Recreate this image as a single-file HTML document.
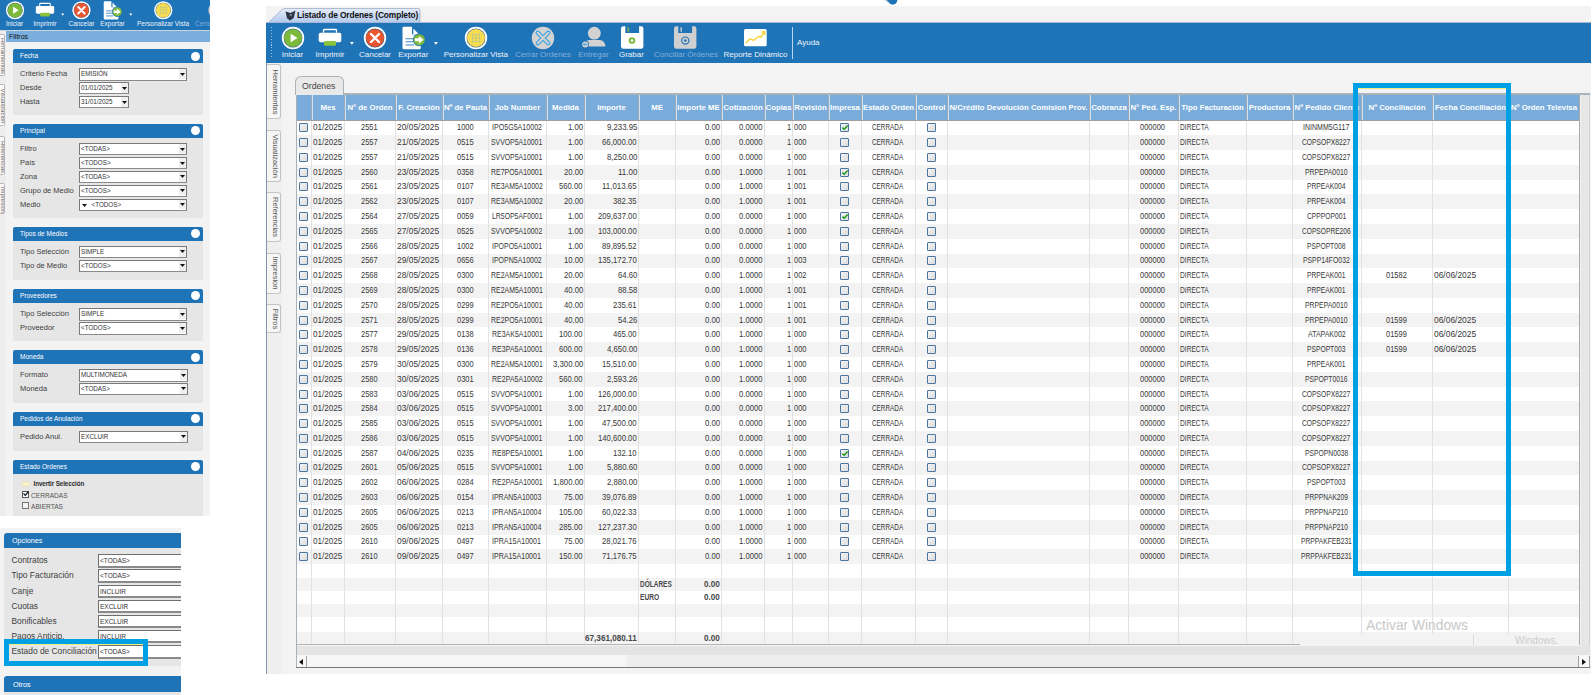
<!DOCTYPE html><html><head><meta charset="utf-8"><style>
html,body{margin:0;padding:0}
body{width:1594px;height:695px;overflow:hidden;background:#fff;position:relative;font-family:"Liberation Sans",sans-serif;color:#333}
div{position:absolute;white-space:nowrap;box-sizing:border-box}
svg{position:absolute;overflow:visible}
</style></head><body>
<div style="left:0px;top:0px;width:210px;height:30px;background:#1f73b7"></div>
<div style="left:0;top:0;width:210px;height:30px;overflow:hidden"><div style="left:0;top:0;width:1px;height:1px;transform-origin:0 0;transform:translate(-222.3px,-20.54px) scale(0.81)"><svg style="left:280.5px;top:25.700000000000003px" width="24" height="24"><circle cx="12" cy="12" r="11.2" fill="#fff"/><circle cx="12" cy="12" r="9.4" fill="#2a5f8f"/><circle cx="12" cy="12" r="9" fill="#7dba3c"/><path d="M9.6 7.8 L16.6 12 L9.6 16.2 Z" fill="#fff"/></svg>
<div style="left:232.39999999999998px;top:49px;width:120px;height:12px;line-height:12px;text-align:center;font-size:8px;color:#eef4fa">Iniciar</div>
<svg style="left:318px;top:29px" width="24" height="18"><path d="M5.5 3.8 V1.2 Q5.5 0.5 6.3 0.5 H17.7 Q18.5 0.5 18.5 1.2 V3.8" stroke="#fff" stroke-width="1.3" fill="none"/><rect x="0.7" y="3.7" width="22.6" height="9.6" rx="1.8" fill="#fff"/><rect x="6" y="12" width="12" height="4.7" rx="1.3" fill="#8cc43c"/></svg>
<div style="left:270px;top:49px;width:120px;height:12px;line-height:12px;text-align:center;font-size:8px;color:#eef4fa">Imprimir</div>
<svg style="left:349.6px;top:41.7px" width="4" height="3"><path d="M0 0H3.8L1.9 2.7Z" fill="#fff"/></svg>
<svg style="left:363.2px;top:25.700000000000003px" width="24" height="24"><circle cx="12" cy="12" r="11.2" fill="#fff"/><circle cx="12" cy="12" r="9.4" fill="#2a5f8f"/><circle cx="12" cy="12" r="9" fill="#e9552e"/><path d="M8 8 L16 16 M16 8 L8 16" stroke="#fff" stroke-width="2.4" stroke-linecap="round"/></svg>
<div style="left:315px;top:49px;width:120px;height:12px;line-height:12px;text-align:center;font-size:8px;color:#eef4fa">Cancelar</div>
<svg style="left:401.5px;top:26.5px" width="25" height="23"><path d="M0.5 1 Q0.5 -0.2 1.8 -0.2 H10 V7.3 H18.7 V21 Q18.7 22.3 17.4 22.3 H1.8 Q0.5 22.3 0.5 21 Z" fill="#fff"/><path d="M11.3 1.5 V7 H16.6 Z" fill="#fff"/><path d="M3.5 11.8H12 M3.5 14.7H12 M3.5 18H12" stroke="#3f86c4" stroke-width="1.1"/><circle cx="17.2" cy="12.8" r="6.4" fill="#1f73b7"/><circle cx="17.2" cy="12.8" r="5.6" fill="#7dba3c"/><path d="M12.8 11.3 H16.8 V8.9 L21.6 12.8 L16.8 16.7 V14.3 H12.8 Z" fill="#fff"/></svg>
<div style="left:353.3px;top:49px;width:120px;height:12px;line-height:12px;text-align:center;font-size:8px;color:#eef4fa">Exportar</div>
<svg style="left:433.8px;top:41.7px" width="4" height="3"><path d="M0 0H3.8L1.9 2.7Z" fill="#fff"/></svg>
<svg style="left:463.9px;top:25.5px" width="24" height="24"><circle cx="12" cy="12" r="11.2" fill="#fff"/><circle cx="12" cy="12" r="9.4" fill="#2a5f8f"/><circle cx="12" cy="12" r="9" fill="#f6dc4e"/><path d="M7.5 8.5H16.5M7.5 12H16.5M7.5 15.5H16.5M8.5 7.5V16.5M12 7.5V16.5M15.5 7.5V16.5" stroke="#b9c98a" stroke-width="0.8"/></svg>
<div style="left:415.8px;top:49px;width:120px;height:12px;line-height:12px;text-align:center;font-size:8px;color:#eef4fa">Personalizar Vista</div>
<svg style="left:530.5px;top:25.5px" width="24" height="24"><circle cx="12" cy="12" r="11.2" fill="#d2d2d2"/><path d="M6.8 6.8 L17.2 17.2 M17.2 6.8 L6.8 17.2" stroke="#3aa1e0" stroke-width="4.4" stroke-linecap="round"/><path d="M6.8 6.8 L17.2 17.2 M17.2 6.8 L6.8 17.2" stroke="#d2d2d2" stroke-width="2.2" stroke-linecap="round"/></svg>
<div style="left:483px;top:49px;width:120px;height:12px;line-height:12px;text-align:center;font-size:8px;color:#82b0dc">Cerrar Ordenes</div>
<svg style="left:581px;top:25.5px" width="26" height="24"><circle cx="13.3" cy="7.2" r="6.4" fill="#d2d2d2"/><path d="M1.5 20.5 Q2.5 14.5 8.5 14 H18.5 Q24 14.5 24.5 20.5Z" fill="#d2d2d2"/><circle cx="4.2" cy="18.4" r="3.8" fill="#1f73b7"/><circle cx="4.2" cy="18.4" r="3" fill="#d2d2d2"/><path d="M2.2 18.4 H5.8" stroke="#3aa1e0" stroke-width="1.5"/></svg>
<div style="left:533.5px;top:49px;width:120px;height:12px;line-height:12px;text-align:center;font-size:8px;color:#82b0dc">Entregar</div>
<svg style="left:621px;top:26px" width="23" height="23"><path d="M2.5 0.2 H20 Q22.4 0.2 22.4 2.6 V20.4 Q22.4 22.8 20 22.8 H2.5 Q0 22.8 0 20.4 V2.6 Q0 0.2 2.5 0.2Z" fill="#fff"/><rect x="4.3" y="0" width="13.8" height="7" fill="#1f73b7"/><rect x="6.5" y="1.2" width="1.4" height="4.5" fill="#7dba3c"/><circle cx="11" cy="14.6" r="3.3" fill="#7dba3c"/><circle cx="11" cy="14.6" r="1.3" fill="#fff"/></svg>
<div style="left:571.4px;top:49px;width:120px;height:12px;line-height:12px;text-align:center;font-size:8px;color:#eef4fa">Grabar</div>
<svg style="left:674.2px;top:26px" width="23" height="23"><path d="M2.5 0.2 H20 Q22.4 0.2 22.4 2.6 V20.4 Q22.4 22.8 20 22.8 H2.5 Q0 22.8 0 20.4 V2.6 Q0 0.2 2.5 0.2Z" fill="#cfcfcf"/><rect x="4.3" y="0" width="13.8" height="7" fill="#1f73b7"/><rect x="6.5" y="1.2" width="1.4" height="4.5" fill="#cfcfcf"/><circle cx="11.3" cy="14.6" r="3.6" fill="none" stroke="#1f73b7" stroke-width="1.2"/><circle cx="11.3" cy="14.6" r="1.3" fill="#1f73b7"/></svg>
<div style="left:626px;top:49px;width:120px;height:12px;line-height:12px;text-align:center;font-size:8px;color:#82b0dc">Conciliar Órdenes</div>
<svg style="left:744px;top:28.9px" width="23" height="18"><rect x="0" y="0" width="22.7" height="17.3" rx="1.5" fill="#fff"/><path d="M2 14 L6 9.8 L10 11.3 L14.5 7.5 L17 8.2 L20 3.5" stroke="#f3d23a" stroke-width="1.4" fill="none" stroke-linejoin="round"/><path d="M17.5 3.2 L20.8 2.6 L20.6 6" stroke="#f3d23a" stroke-width="1.4" fill="none"/></svg>
<div style="left:695.5px;top:49px;width:120px;height:12px;line-height:12px;text-align:center;font-size:8px;color:#eef4fa">Reporte Dinámico</div>
<div style="left:792px;top:26.8px;width:1.2px;height:32.5px;background:#bcd4ec"></div>
<div style="left:797px;top:37px;width:40px;height:12px;line-height:12px;font-size:8px;color:#eef4fa">Ayuda</div></div></div>
<div style="left:0px;top:30px;width:6px;height:486px;background:#ededed"></div>
<div style="left:0;top:33.5px;width:5px;height:42.0px;border:1px solid #b8b8b8;border-left:none;background:#f9f9f9;border-radius:0 2px 2px 0;overflow:hidden"><div style="left:-27.5px;top:17.0px;width:60px;height:8px;line-height:8px;text-align:center;font-size:6px;color:#666;transform:rotate(90deg)">Herramientas</div></div>
<div style="left:0;top:84px;width:5px;height:42px;border:1px solid #b8b8b8;border-left:none;background:#f9f9f9;border-radius:0 2px 2px 0;overflow:hidden"><div style="left:-27.5px;top:17.0px;width:60px;height:8px;line-height:8px;text-align:center;font-size:6px;color:#666;transform:rotate(90deg)">Visualización</div></div>
<div style="left:0;top:136px;width:5px;height:39px;border:1px solid #b8b8b8;border-left:none;background:#f9f9f9;border-radius:0 2px 2px 0;overflow:hidden"><div style="left:-27.5px;top:15.5px;width:60px;height:8px;line-height:8px;text-align:center;font-size:6px;color:#666;transform:rotate(90deg)">Referencias</div></div>
<div style="left:0;top:183px;width:5px;height:31px;border:1px solid #b8b8b8;border-left:none;background:#f9f9f9;border-radius:0 2px 2px 0;overflow:hidden"><div style="left:-27.5px;top:11.5px;width:60px;height:8px;line-height:8px;text-align:center;font-size:6px;color:#666;transform:rotate(90deg)">Impresion</div></div>
<div style="left:0px;top:30px;width:210px;height:1px;background:#c9d3dc"></div>
<div style="left:6px;top:30.5px;width:204px;height:11px;background:#7aaedc"></div>
<div style="left:9px;top:30.5px;width:60px;height:11px;line-height:11px;font-size:7px;color:#111">Filtros</div>
<div style="left:6px;top:41.5px;width:204px;height:474.5px;background:#f3f3f3"></div>
<div style="left:13px;top:49px;width:190px;height:14px;background:#1f73b7;border-radius:2px 2px 0 0"></div>
<div style="left:20px;top:49px;width:150px;height:14px;line-height:14px;font-size:6.5px;color:#fff">Fecha</div>
<div style="left:191px;top:51.5px;width:9px;height:9px;border-radius:50%;background:#fff"></div>
<div style="left:13px;top:63px;width:190px;height:52px;background:#e6e6e6"></div>
<div style="left:20px;top:68.3px;width:58px;height:12.299999999999997px;line-height:12.299999999999997px;font-size:7.5px;color:#3e3e3e">Criterio Fecha</div>
<div style="left:79px;top:68.3px;width:108px;height:12.299999999999997px;background:#fff;border:1px solid #7a7a7a;border-bottom:1.5px solid #8a8a8a"></div>
<div style="left:81px;top:68.3px;width:98px;height:12.299999999999997px;line-height:12.299999999999997px;font-size:6.3px;color:#333">EMISIÓN</div>
<div style="left:178.5px;top:69.3px;width:7.5px;height:9.799999999999997px;background:#efefef"></div>
<svg style="left:179.7px;top:72.64999999999999px" width="5" height="3"><path d="M0 0H5L2.5 3Z" fill="#111"/></svg>
<div style="left:20px;top:82.4px;width:58px;height:12.0px;line-height:12.0px;font-size:7.5px;color:#3e3e3e">Desde</div>
<div style="left:79px;top:82.4px;width:50px;height:12.0px;background:#fff;border:1px solid #7a7a7a;border-bottom:1.5px solid #8a8a8a"></div>
<div style="left:81px;top:82.4px;width:40px;height:12.0px;line-height:12.0px;font-size:6.3px;color:#333">01/01/2025</div>
<div style="left:120.5px;top:83.4px;width:7.5px;height:9.5px;background:#efefef"></div>
<svg style="left:121.7px;top:86.60000000000001px" width="5" height="3"><path d="M0 0H5L2.5 3Z" fill="#111"/></svg>
<div style="left:20px;top:96.3px;width:58px;height:12.0px;line-height:12.0px;font-size:7.5px;color:#3e3e3e">Hasta</div>
<div style="left:79px;top:96.3px;width:50px;height:12.0px;background:#fff;border:1px solid #7a7a7a;border-bottom:1.5px solid #8a8a8a"></div>
<div style="left:81px;top:96.3px;width:40px;height:12.0px;line-height:12.0px;font-size:6.3px;color:#333">31/01/2025</div>
<div style="left:120.5px;top:97.3px;width:7.5px;height:9.5px;background:#efefef"></div>
<svg style="left:121.7px;top:100.5px" width="5" height="3"><path d="M0 0H5L2.5 3Z" fill="#111"/></svg>
<div style="left:13px;top:123.7px;width:190px;height:14px;background:#1f73b7;border-radius:2px 2px 0 0"></div>
<div style="left:20px;top:123.7px;width:150px;height:14px;line-height:14px;font-size:6.5px;color:#fff">Principal</div>
<div style="left:191px;top:126.2px;width:9px;height:9px;border-radius:50%;background:#fff"></div>
<div style="left:13px;top:137.7px;width:190px;height:80.3px;background:#e6e6e6"></div>
<div style="left:20px;top:143.2px;width:58px;height:12.300000000000011px;line-height:12.300000000000011px;font-size:7.5px;color:#3e3e3e">Filtro</div>
<div style="left:79px;top:143.2px;width:108px;height:12.300000000000011px;background:#fff;border:1px solid #7a7a7a;border-bottom:1.5px solid #8a8a8a"></div>
<div style="left:81px;top:143.2px;width:98px;height:12.300000000000011px;line-height:12.300000000000011px;font-size:6.3px;color:#333">&lt;TODAS&gt;</div>
<div style="left:178.5px;top:144.2px;width:7.5px;height:9.800000000000011px;background:#efefef"></div>
<svg style="left:179.7px;top:147.54999999999998px" width="5" height="3"><path d="M0 0H5L2.5 3Z" fill="#111"/></svg>
<div style="left:20px;top:157.2px;width:58px;height:12.300000000000011px;line-height:12.300000000000011px;font-size:7.5px;color:#3e3e3e">País</div>
<div style="left:79px;top:157.2px;width:108px;height:12.300000000000011px;background:#fff;border:1px solid #7a7a7a;border-bottom:1.5px solid #8a8a8a"></div>
<div style="left:81px;top:157.2px;width:98px;height:12.300000000000011px;line-height:12.300000000000011px;font-size:6.3px;color:#333">&lt;TODOS&gt;</div>
<div style="left:178.5px;top:158.2px;width:7.5px;height:9.800000000000011px;background:#efefef"></div>
<svg style="left:179.7px;top:161.54999999999998px" width="5" height="3"><path d="M0 0H5L2.5 3Z" fill="#111"/></svg>
<div style="left:20px;top:171px;width:58px;height:12.300000000000011px;line-height:12.300000000000011px;font-size:7.5px;color:#3e3e3e">Zona</div>
<div style="left:79px;top:171px;width:108px;height:12.300000000000011px;background:#fff;border:1px solid #7a7a7a;border-bottom:1.5px solid #8a8a8a"></div>
<div style="left:81px;top:171px;width:98px;height:12.300000000000011px;line-height:12.300000000000011px;font-size:6.3px;color:#333">&lt;TODAS&gt;</div>
<div style="left:178.5px;top:172px;width:7.5px;height:9.800000000000011px;background:#efefef"></div>
<svg style="left:179.7px;top:175.35px" width="5" height="3"><path d="M0 0H5L2.5 3Z" fill="#111"/></svg>
<div style="left:20px;top:184.6px;width:58px;height:12.400000000000006px;line-height:12.400000000000006px;font-size:7.5px;color:#3e3e3e">Grupo de Medio</div>
<div style="left:79px;top:184.6px;width:108px;height:12.400000000000006px;background:#fff;border:1px solid #7a7a7a;border-bottom:1.5px solid #8a8a8a"></div>
<div style="left:81px;top:184.6px;width:98px;height:12.400000000000006px;line-height:12.400000000000006px;font-size:6.3px;color:#333">&lt;TODOS&gt;</div>
<div style="left:178.5px;top:185.6px;width:7.5px;height:9.900000000000006px;background:#efefef"></div>
<svg style="left:179.7px;top:189.0px" width="5" height="3"><path d="M0 0H5L2.5 3Z" fill="#111"/></svg>
<div style="left:20px;top:198.6px;width:58px;height:12.400000000000006px;line-height:12.400000000000006px;font-size:7.5px;color:#3e3e3e">Medio</div>
<div style="left:79px;top:198.6px;width:108px;height:12.400000000000006px;background:#fff;border:1px solid #7a7a7a;border-bottom:1.5px solid #8a8a8a"></div>
<div style="left:81px;top:198.6px;width:98px;height:12.400000000000006px;line-height:12.400000000000006px;font-size:6.3px;color:#333">&nbsp;&nbsp;&nbsp;&nbsp;&nbsp;&nbsp;&lt;TODOS&gt;</div>
<div style="left:178.5px;top:199.6px;width:7.5px;height:9.900000000000006px;background:#efefef"></div>
<svg style="left:179.7px;top:203.0px" width="5" height="3"><path d="M0 0H5L2.5 3Z" fill="#111"/></svg>
<svg style="left:82px;top:203.5px" width="5" height="3"><path d="M0 0H5L2.5 3Z" fill="#111"/></svg>
<div style="left:13px;top:226.5px;width:190px;height:14px;background:#1f73b7;border-radius:2px 2px 0 0"></div>
<div style="left:20px;top:226.5px;width:150px;height:14px;line-height:14px;font-size:6.5px;color:#fff">Tipos de Medios</div>
<div style="left:191px;top:229.0px;width:9px;height:9px;border-radius:50%;background:#fff"></div>
<div style="left:13px;top:240.5px;width:190px;height:39.80000000000001px;background:#e6e6e6"></div>
<div style="left:20px;top:246px;width:58px;height:12.300000000000011px;line-height:12.300000000000011px;font-size:7.5px;color:#3e3e3e">Tipo Selección</div>
<div style="left:79px;top:246px;width:108px;height:12.300000000000011px;background:#fff;border:1px solid #7a7a7a;border-bottom:1.5px solid #8a8a8a"></div>
<div style="left:81px;top:246px;width:98px;height:12.300000000000011px;line-height:12.300000000000011px;font-size:6.3px;color:#333">SIMPLE</div>
<div style="left:178.5px;top:247px;width:7.5px;height:9.800000000000011px;background:#efefef"></div>
<svg style="left:179.7px;top:250.35px" width="5" height="3"><path d="M0 0H5L2.5 3Z" fill="#111"/></svg>
<div style="left:20px;top:260px;width:58px;height:12.300000000000011px;line-height:12.300000000000011px;font-size:7.5px;color:#3e3e3e">Tipo de Medio</div>
<div style="left:79px;top:260px;width:108px;height:12.300000000000011px;background:#fff;border:1px solid #7a7a7a;border-bottom:1.5px solid #8a8a8a"></div>
<div style="left:81px;top:260px;width:98px;height:12.300000000000011px;line-height:12.300000000000011px;font-size:6.3px;color:#333">&lt;TODOS&gt;</div>
<div style="left:178.5px;top:261px;width:7.5px;height:9.800000000000011px;background:#efefef"></div>
<svg style="left:179.7px;top:264.34999999999997px" width="5" height="3"><path d="M0 0H5L2.5 3Z" fill="#111"/></svg>
<div style="left:13px;top:288.6px;width:190px;height:14px;background:#1f73b7;border-radius:2px 2px 0 0"></div>
<div style="left:20px;top:288.6px;width:150px;height:14px;line-height:14px;font-size:6.5px;color:#fff">Proveedores</div>
<div style="left:191px;top:291.1px;width:9px;height:9px;border-radius:50%;background:#fff"></div>
<div style="left:13px;top:302.6px;width:190px;height:38.89999999999998px;background:#e6e6e6"></div>
<div style="left:20px;top:308.3px;width:58px;height:12.5px;line-height:12.5px;font-size:7.5px;color:#3e3e3e">Tipo Selección</div>
<div style="left:79px;top:308.3px;width:108px;height:12.5px;background:#fff;border:1px solid #7a7a7a;border-bottom:1.5px solid #8a8a8a"></div>
<div style="left:81px;top:308.3px;width:98px;height:12.5px;line-height:12.5px;font-size:6.3px;color:#333">SIMPLE</div>
<div style="left:178.5px;top:309.3px;width:7.5px;height:10.0px;background:#efefef"></div>
<svg style="left:179.7px;top:312.75px" width="5" height="3"><path d="M0 0H5L2.5 3Z" fill="#111"/></svg>
<div style="left:20px;top:322.1px;width:58px;height:12.5px;line-height:12.5px;font-size:7.5px;color:#3e3e3e">Proveedor</div>
<div style="left:79px;top:322.1px;width:108px;height:12.5px;background:#fff;border:1px solid #7a7a7a;border-bottom:1.5px solid #8a8a8a"></div>
<div style="left:81px;top:322.1px;width:98px;height:12.5px;line-height:12.5px;font-size:6.3px;color:#333">&lt;TODOS&gt;</div>
<div style="left:178.5px;top:323.1px;width:7.5px;height:10.0px;background:#efefef"></div>
<svg style="left:179.7px;top:326.55px" width="5" height="3"><path d="M0 0H5L2.5 3Z" fill="#111"/></svg>
<div style="left:13px;top:350.1px;width:190px;height:14px;background:#1f73b7;border-radius:2px 2px 0 0"></div>
<div style="left:20px;top:350.1px;width:150px;height:14px;line-height:14px;font-size:6.5px;color:#fff">Moneda</div>
<div style="left:191px;top:352.6px;width:9px;height:9px;border-radius:50%;background:#fff"></div>
<div style="left:13px;top:364.1px;width:190px;height:38.5px;background:#e6e6e6"></div>
<div style="left:20px;top:369px;width:58px;height:12.600000000000023px;line-height:12.600000000000023px;font-size:7.5px;color:#3e3e3e">Formato</div>
<div style="left:79px;top:369px;width:109px;height:12.600000000000023px;background:#fff;border:1px solid #7a7a7a;border-bottom:1.5px solid #8a8a8a"></div>
<div style="left:81px;top:369px;width:99px;height:12.600000000000023px;line-height:12.600000000000023px;font-size:6.3px;color:#333">MULTIMONEDA</div>
<div style="left:179.5px;top:370px;width:7.5px;height:10.100000000000023px;background:#efefef"></div>
<svg style="left:180.7px;top:373.5px" width="5" height="3"><path d="M0 0H5L2.5 3Z" fill="#111"/></svg>
<div style="left:20px;top:383px;width:58px;height:12.399999999999977px;line-height:12.399999999999977px;font-size:7.5px;color:#3e3e3e">Moneda</div>
<div style="left:79px;top:383px;width:109px;height:12.399999999999977px;background:#fff;border:1px solid #7a7a7a;border-bottom:1.5px solid #8a8a8a"></div>
<div style="left:81px;top:383px;width:99px;height:12.399999999999977px;line-height:12.399999999999977px;font-size:6.3px;color:#333">&lt;TODAS&gt;</div>
<div style="left:179.5px;top:384px;width:7.5px;height:9.899999999999977px;background:#efefef"></div>
<svg style="left:180.7px;top:387.4px" width="5" height="3"><path d="M0 0H5L2.5 3Z" fill="#111"/></svg>
<div style="left:13px;top:411.6px;width:190px;height:14px;background:#1f73b7;border-radius:2px 2px 0 0"></div>
<div style="left:20px;top:411.6px;width:150px;height:14px;line-height:14px;font-size:6.5px;color:#fff">Pedidos de Anulación</div>
<div style="left:191px;top:414.1px;width:9px;height:9px;border-radius:50%;background:#fff"></div>
<div style="left:13px;top:425.6px;width:190px;height:25.399999999999977px;background:#e6e6e6"></div>
<div style="left:20px;top:431px;width:58px;height:12.399999999999977px;line-height:12.399999999999977px;font-size:7.5px;color:#3e3e3e">Pedido Anul.</div>
<div style="left:79px;top:431px;width:109px;height:12.399999999999977px;background:#fff;border:1px solid #7a7a7a;border-bottom:1.5px solid #8a8a8a"></div>
<div style="left:81px;top:431px;width:99px;height:12.399999999999977px;line-height:12.399999999999977px;font-size:6.3px;color:#333">EXCLUIR</div>
<div style="left:179.5px;top:432px;width:7.5px;height:9.899999999999977px;background:#efefef"></div>
<svg style="left:180.7px;top:435.4px" width="5" height="3"><path d="M0 0H5L2.5 3Z" fill="#111"/></svg>
<div style="left:13px;top:459.6px;width:190px;height:14px;background:#1f73b7;border-radius:2px 2px 0 0"></div>
<div style="left:20px;top:459.6px;width:150px;height:14px;line-height:14px;font-size:6.5px;color:#fff">Estado Ordenes</div>
<div style="left:191px;top:462.1px;width:9px;height:9px;border-radius:50%;background:#fff"></div>
<div style="left:13px;top:473.6px;width:190px;height:42.39999999999998px;background:#e6e6e6"></div>
<div style="left:33.5px;top:479px;width:80px;height:9px;line-height:9px;font-size:6.3px;font-weight:bold;color:#2a2a2a;letter-spacing:-0.1px">Invertir Selección</div>
<svg style="left:22px;top:481px" width="9" height="6"><path d="M0 1 L5 1 L5 0 L8.5 3 L5 6 L5 5 L0 5Z" fill="#f7f3d0" stroke="#e0d890" stroke-width="0.5"/></svg>
<div style="left:22px;top:490.5px;width:7px;height:7px;border:1px solid #555;background:#fff"></div>
<svg style="left:23px;top:491px" width="6" height="5"><path d="M0.5 2.5L2.3 4.3L5.5 0.5" stroke="#111" stroke-width="1.2" fill="none"/></svg>
<div style="left:31px;top:490.5px;width:50px;height:10px;line-height:10px;font-size:6.6px;color:#555">CERRADAS</div>
<div style="left:22px;top:502px;width:7px;height:7px;border:1px solid #777;background:#f4f4f4"></div>
<div style="left:31px;top:502px;width:50px;height:10px;line-height:10px;font-size:6.6px;color:#555">ABIERTAS</div>
<div style="left:0px;top:528px;width:181px;height:167px;background:#f3f3f3"></div>
<div style="left:4px;top:532.6px;width:177px;height:15.4px;background:#1f73b7;border-radius:3px 0 0 0"></div>
<div style="left:12px;top:533.3px;width:80px;height:15.4px;line-height:15.4px;font-size:7.2px;color:#fff">Opciones</div>
<div style="left:4px;top:548px;width:177px;height:118px;background:#e6e6e6"></div>
<div style="left:11.5px;top:554px;width:90px;height:13.5px;line-height:13.5px;font-size:8.4px;color:#3e3e3e">Contratos</div>
<div style="left:98px;top:554px;width:90px;height:13.5px;background:#fff;border:1px solid #6f6f6f;border-bottom:2px solid #8a8a8a;border-right:none"></div>
<div style="left:100px;top:554px;width:60px;height:13.5px;line-height:13.5px;font-size:6.5px;color:#333">&lt;TODAS&gt;</div>
<div style="left:11.5px;top:569px;width:90px;height:13.5px;line-height:13.5px;font-size:8.4px;color:#3e3e3e">Tipo Facturación</div>
<div style="left:98px;top:569px;width:90px;height:13.5px;background:#fff;border:1px solid #6f6f6f;border-bottom:2px solid #8a8a8a;border-right:none"></div>
<div style="left:100px;top:569px;width:60px;height:13.5px;line-height:13.5px;font-size:6.5px;color:#333">&lt;TODAS&gt;</div>
<div style="left:11.5px;top:584.6px;width:90px;height:13.5px;line-height:13.5px;font-size:8.4px;color:#3e3e3e">Canje</div>
<div style="left:98px;top:584.6px;width:90px;height:13.5px;background:#fff;border:1px solid #6f6f6f;border-bottom:2px solid #8a8a8a;border-right:none"></div>
<div style="left:100px;top:584.6px;width:60px;height:13.5px;line-height:13.5px;font-size:6.5px;color:#333">INCLUIR</div>
<div style="left:11.5px;top:599.6px;width:90px;height:13.5px;line-height:13.5px;font-size:8.4px;color:#3e3e3e">Cuotas</div>
<div style="left:98px;top:599.6px;width:90px;height:13.5px;background:#fff;border:1px solid #6f6f6f;border-bottom:2px solid #8a8a8a;border-right:none"></div>
<div style="left:100px;top:599.6px;width:60px;height:13.5px;line-height:13.5px;font-size:6.5px;color:#333">EXCLUIR</div>
<div style="left:11.5px;top:614.6px;width:90px;height:13.5px;line-height:13.5px;font-size:8.4px;color:#3e3e3e">Bonificables</div>
<div style="left:98px;top:614.6px;width:90px;height:13.5px;background:#fff;border:1px solid #6f6f6f;border-bottom:2px solid #8a8a8a;border-right:none"></div>
<div style="left:100px;top:614.6px;width:60px;height:13.5px;line-height:13.5px;font-size:6.5px;color:#333">EXCLUIR</div>
<div style="left:11.5px;top:629.6px;width:90px;height:13.5px;line-height:13.5px;font-size:8.4px;color:#3e3e3e">Pagos Anticip.</div>
<div style="left:98px;top:629.6px;width:90px;height:13.5px;background:#fff;border:1px solid #6f6f6f;border-bottom:2px solid #8a8a8a;border-right:none"></div>
<div style="left:100px;top:629.6px;width:60px;height:13.5px;line-height:13.5px;font-size:6.5px;color:#333">INCLUIR</div>
<div style="left:11.5px;top:645.3px;width:90px;height:13.5px;line-height:13.5px;font-size:8.4px;color:#3e3e3e">Estado de Conciliación</div>
<div style="left:98px;top:645.3px;width:90px;height:13.5px;background:#fff;border:1px solid #6f6f6f;border-bottom:2px solid #8a8a8a;border-right:none"></div>
<div style="left:100px;top:645.3px;width:60px;height:13.5px;line-height:13.5px;font-size:6.5px;color:#333">&lt;TODAS&gt;</div>
<div style="left:181px;top:528px;width:13px;height:167px;background:#fff"></div>
<div style="left:4px;top:676px;width:177px;height:15.5px;background:#1f73b7;border-radius:3px 0 0 0"></div>
<div style="left:13px;top:677px;width:80px;height:15.5px;line-height:15.5px;font-size:7.2px;color:#fff">Otros</div>
<div style="left:4px;top:691.5px;width:177px;height:4px;background:#e6e6e6"></div>
<div style="left:4px;top:639px;width:144px;height:27px;border:5px solid #00a1e4"></div>
<div style="left:9px;top:644px;width:134px;height:0.8px;background:#f0ee80"></div>
<div style="left:266px;top:6px;width:1325px;height:668px;background:#f3f3f3"></div>
<div style="left:266px;top:22px;width:1px;height:652px;background:#8494ab"></div>
<svg style="left:266px;top:8px" width="156" height="15"><defs><linearGradient id="tg" x1="0" y1="0" x2="0" y2="1"><stop offset="0" stop-color="#e4ecf9"/><stop offset="1" stop-color="#b4c9ec"/></linearGradient></defs><path d="M2.5 14.5 L16 1.5 Q17 0.5 19 0.5 H152 Q154 0.5 154 2.5 V14.5 Z" fill="url(#tg)" stroke="#a0aec4" stroke-width="0.8"/></svg>
<svg style="left:284.5px;top:10px" width="11" height="11"><path d="M0.5 1.5 L5.5 3 L10.5 0.5 L8.7 8 L5 10.5 L2 8.3 Z" fill="#2b3440"/><path d="M4.2 4.5 L7 4 L6.2 6.8 Z" fill="#8a9aad"/></svg>
<div style="left:297px;top:8.5px;width:130px;height:13.5px;line-height:13.5px;font-size:8.4px;font-weight:bold;color:#111;letter-spacing:-0.12px">Listado de Ordenes (Completo)</div>
<div style="left:266px;top:22.3px;width:1325px;height:40.6px;background:#1f73b7;border-top:1px solid #a9b6d6"></div>
<div style="left:271px;top:27.0px;width:1.2px;height:1.2px;background:#9cc0e6"></div>
<div style="left:271px;top:29.9px;width:1.2px;height:1.2px;background:#9cc0e6"></div>
<div style="left:271px;top:32.8px;width:1.2px;height:1.2px;background:#9cc0e6"></div>
<div style="left:271px;top:35.7px;width:1.2px;height:1.2px;background:#9cc0e6"></div>
<div style="left:271px;top:38.6px;width:1.2px;height:1.2px;background:#9cc0e6"></div>
<div style="left:271px;top:41.5px;width:1.2px;height:1.2px;background:#9cc0e6"></div>
<div style="left:271px;top:44.4px;width:1.2px;height:1.2px;background:#9cc0e6"></div>
<div style="left:271px;top:47.3px;width:1.2px;height:1.2px;background:#9cc0e6"></div>
<div style="left:271px;top:50.2px;width:1.2px;height:1.2px;background:#9cc0e6"></div>
<div style="left:271px;top:53.099999999999994px;width:1.2px;height:1.2px;background:#9cc0e6"></div>
<div style="left:271px;top:56.0px;width:1.2px;height:1.2px;background:#9cc0e6"></div>
<svg style="left:280.5px;top:25.700000000000003px" width="24" height="24"><circle cx="12" cy="12" r="11.2" fill="#fff"/><circle cx="12" cy="12" r="9.4" fill="#2a5f8f"/><circle cx="12" cy="12" r="9" fill="#7dba3c"/><path d="M9.6 7.8 L16.6 12 L9.6 16.2 Z" fill="#fff"/></svg>
<div style="left:232.39999999999998px;top:49px;width:120px;height:12px;line-height:12px;text-align:center;font-size:8px;color:#eef4fa">Iniciar</div>
<svg style="left:318px;top:29px" width="24" height="18"><path d="M5.5 3.8 V1.2 Q5.5 0.5 6.3 0.5 H17.7 Q18.5 0.5 18.5 1.2 V3.8" stroke="#fff" stroke-width="1.3" fill="none"/><rect x="0.7" y="3.7" width="22.6" height="9.6" rx="1.8" fill="#fff"/><rect x="6" y="12" width="12" height="4.7" rx="1.3" fill="#8cc43c"/></svg>
<div style="left:270px;top:49px;width:120px;height:12px;line-height:12px;text-align:center;font-size:8px;color:#eef4fa">Imprimir</div>
<svg style="left:349.6px;top:41.7px" width="4" height="3"><path d="M0 0H3.8L1.9 2.7Z" fill="#fff"/></svg>
<svg style="left:363.2px;top:25.700000000000003px" width="24" height="24"><circle cx="12" cy="12" r="11.2" fill="#fff"/><circle cx="12" cy="12" r="9.4" fill="#2a5f8f"/><circle cx="12" cy="12" r="9" fill="#e9552e"/><path d="M8 8 L16 16 M16 8 L8 16" stroke="#fff" stroke-width="2.4" stroke-linecap="round"/></svg>
<div style="left:315px;top:49px;width:120px;height:12px;line-height:12px;text-align:center;font-size:8px;color:#eef4fa">Cancelar</div>
<svg style="left:401.5px;top:26.5px" width="25" height="23"><path d="M0.5 1 Q0.5 -0.2 1.8 -0.2 H10 V7.3 H18.7 V21 Q18.7 22.3 17.4 22.3 H1.8 Q0.5 22.3 0.5 21 Z" fill="#fff"/><path d="M11.3 1.5 V7 H16.6 Z" fill="#fff"/><path d="M3.5 11.8H12 M3.5 14.7H12 M3.5 18H12" stroke="#3f86c4" stroke-width="1.1"/><circle cx="17.2" cy="12.8" r="6.4" fill="#1f73b7"/><circle cx="17.2" cy="12.8" r="5.6" fill="#7dba3c"/><path d="M12.8 11.3 H16.8 V8.9 L21.6 12.8 L16.8 16.7 V14.3 H12.8 Z" fill="#fff"/></svg>
<div style="left:353.3px;top:49px;width:120px;height:12px;line-height:12px;text-align:center;font-size:8px;color:#eef4fa">Exportar</div>
<svg style="left:433.8px;top:41.7px" width="4" height="3"><path d="M0 0H3.8L1.9 2.7Z" fill="#fff"/></svg>
<svg style="left:463.9px;top:25.5px" width="24" height="24"><circle cx="12" cy="12" r="11.2" fill="#fff"/><circle cx="12" cy="12" r="9.4" fill="#2a5f8f"/><circle cx="12" cy="12" r="9" fill="#f6dc4e"/><path d="M7.5 8.5H16.5M7.5 12H16.5M7.5 15.5H16.5M8.5 7.5V16.5M12 7.5V16.5M15.5 7.5V16.5" stroke="#b9c98a" stroke-width="0.8"/></svg>
<div style="left:415.8px;top:49px;width:120px;height:12px;line-height:12px;text-align:center;font-size:8px;color:#eef4fa">Personalizar Vista</div>
<svg style="left:530.5px;top:25.5px" width="24" height="24"><circle cx="12" cy="12" r="11.2" fill="#d2d2d2"/><path d="M6.8 6.8 L17.2 17.2 M17.2 6.8 L6.8 17.2" stroke="#3aa1e0" stroke-width="4.4" stroke-linecap="round"/><path d="M6.8 6.8 L17.2 17.2 M17.2 6.8 L6.8 17.2" stroke="#d2d2d2" stroke-width="2.2" stroke-linecap="round"/></svg>
<div style="left:483px;top:49px;width:120px;height:12px;line-height:12px;text-align:center;font-size:8px;color:#82b0dc">Cerrar Ordenes</div>
<svg style="left:581px;top:25.5px" width="26" height="24"><circle cx="13.3" cy="7.2" r="6.4" fill="#d2d2d2"/><path d="M1.5 20.5 Q2.5 14.5 8.5 14 H18.5 Q24 14.5 24.5 20.5Z" fill="#d2d2d2"/><circle cx="4.2" cy="18.4" r="3.8" fill="#1f73b7"/><circle cx="4.2" cy="18.4" r="3" fill="#d2d2d2"/><path d="M2.2 18.4 H5.8" stroke="#3aa1e0" stroke-width="1.5"/></svg>
<div style="left:533.5px;top:49px;width:120px;height:12px;line-height:12px;text-align:center;font-size:8px;color:#82b0dc">Entregar</div>
<svg style="left:621px;top:26px" width="23" height="23"><path d="M2.5 0.2 H20 Q22.4 0.2 22.4 2.6 V20.4 Q22.4 22.8 20 22.8 H2.5 Q0 22.8 0 20.4 V2.6 Q0 0.2 2.5 0.2Z" fill="#fff"/><rect x="4.3" y="0" width="13.8" height="7" fill="#1f73b7"/><rect x="6.5" y="1.2" width="1.4" height="4.5" fill="#7dba3c"/><circle cx="11" cy="14.6" r="3.3" fill="#7dba3c"/><circle cx="11" cy="14.6" r="1.3" fill="#fff"/></svg>
<div style="left:571.4px;top:49px;width:120px;height:12px;line-height:12px;text-align:center;font-size:8px;color:#eef4fa">Grabar</div>
<svg style="left:674.2px;top:26px" width="23" height="23"><path d="M2.5 0.2 H20 Q22.4 0.2 22.4 2.6 V20.4 Q22.4 22.8 20 22.8 H2.5 Q0 22.8 0 20.4 V2.6 Q0 0.2 2.5 0.2Z" fill="#cfcfcf"/><rect x="4.3" y="0" width="13.8" height="7" fill="#1f73b7"/><rect x="6.5" y="1.2" width="1.4" height="4.5" fill="#cfcfcf"/><circle cx="11.3" cy="14.6" r="3.6" fill="none" stroke="#1f73b7" stroke-width="1.2"/><circle cx="11.3" cy="14.6" r="1.3" fill="#1f73b7"/></svg>
<div style="left:626px;top:49px;width:120px;height:12px;line-height:12px;text-align:center;font-size:8px;color:#82b0dc">Conciliar Órdenes</div>
<svg style="left:744px;top:28.9px" width="23" height="18"><rect x="0" y="0" width="22.7" height="17.3" rx="1.5" fill="#fff"/><path d="M2 14 L6 9.8 L10 11.3 L14.5 7.5 L17 8.2 L20 3.5" stroke="#f3d23a" stroke-width="1.4" fill="none" stroke-linejoin="round"/><path d="M17.5 3.2 L20.8 2.6 L20.6 6" stroke="#f3d23a" stroke-width="1.4" fill="none"/></svg>
<div style="left:695.5px;top:49px;width:120px;height:12px;line-height:12px;text-align:center;font-size:8px;color:#eef4fa">Reporte Dinámico</div>
<div style="left:792px;top:26.8px;width:1.2px;height:32.5px;background:#bcd4ec"></div>
<div style="left:797px;top:37px;width:40px;height:12px;line-height:12px;font-size:8px;color:#eef4fa">Ayuda</div>
<div style="left:267px;top:63px;width:15px;height:611px;background:#efefef"></div>
<div style="left:267px;top:64.4px;width:14px;height:55.0px;background:#f6f6f6;border:1px solid #c4c4c4;border-left:none;border-radius:0 3px 3px 0"></div>
<div style="left:244.5px;top:86.9px;width:60px;height:10px;line-height:10px;text-align:center;font-size:7.5px;color:#555;transform:rotate(90deg)">Herramientas</div>
<div style="left:267px;top:129.5px;width:14px;height:52.5px;background:#f6f6f6;border:1px solid #c4c4c4;border-left:none;border-radius:0 3px 3px 0"></div>
<div style="left:244.5px;top:150.75px;width:60px;height:10px;line-height:10px;text-align:center;font-size:7.5px;color:#555;transform:rotate(90deg)">Visualización</div>
<div style="left:267px;top:191.5px;width:14px;height:50.69999999999999px;background:#f6f6f6;border:1px solid #c4c4c4;border-left:none;border-radius:0 3px 3px 0"></div>
<div style="left:244.5px;top:211.85px;width:60px;height:10px;line-height:10px;text-align:center;font-size:7.5px;color:#555;transform:rotate(90deg)">Referencias</div>
<div style="left:267px;top:252.5px;width:14px;height:41.5px;background:#f6f6f6;border:1px solid #c4c4c4;border-left:none;border-radius:0 3px 3px 0"></div>
<div style="left:244.5px;top:268.25px;width:60px;height:10px;line-height:10px;text-align:center;font-size:7.5px;color:#555;transform:rotate(90deg)">Impresion</div>
<div style="left:267px;top:304.3px;width:14px;height:28.69999999999999px;background:#f6f6f6;border:1px solid #c4c4c4;border-left:none;border-radius:0 3px 3px 0"></div>
<div style="left:244.5px;top:313.65px;width:60px;height:10px;line-height:10px;text-align:center;font-size:7.5px;color:#555;transform:rotate(90deg)">Filtros</div>
<div style="left:295.3px;top:76px;width:48.5px;height:19px;background:#e9e9e9;border:1.5px solid #aab3ba;border-bottom:none;border-radius:6px 6px 0 0"></div>
<div style="left:302px;top:78px;width:40px;height:16px;line-height:16px;font-size:8.7px;color:#444">Ordenes</div>
<div style="left:343px;top:93px;width:1247px;height:1.5px;background:#aab3ba"></div>
<div style="left:296px;top:95px;width:1283px;height:549.5px;background:#fff"></div>
<div style="left:296px;top:135.19px;width:1283px;height:14.79px;background:#f3f3f3"></div>
<div style="left:296px;top:164.77px;width:1283px;height:14.79px;background:#f3f3f3"></div>
<div style="left:296px;top:194.35px;width:1283px;height:14.79px;background:#f3f3f3"></div>
<div style="left:296px;top:223.93px;width:1283px;height:14.79px;background:#f3f3f3"></div>
<div style="left:296px;top:253.51px;width:1283px;height:14.79px;background:#f3f3f3"></div>
<div style="left:296px;top:283.09000000000003px;width:1283px;height:14.79px;background:#f3f3f3"></div>
<div style="left:296px;top:312.66999999999996px;width:1283px;height:14.79px;background:#f3f3f3"></div>
<div style="left:296px;top:342.25px;width:1283px;height:14.79px;background:#f3f3f3"></div>
<div style="left:296px;top:371.83px;width:1283px;height:14.79px;background:#f3f3f3"></div>
<div style="left:296px;top:401.40999999999997px;width:1283px;height:14.79px;background:#f3f3f3"></div>
<div style="left:296px;top:430.99px;width:1283px;height:14.79px;background:#f3f3f3"></div>
<div style="left:296px;top:460.56999999999994px;width:1283px;height:14.79px;background:#f3f3f3"></div>
<div style="left:296px;top:490.15px;width:1283px;height:14.79px;background:#f3f3f3"></div>
<div style="left:296px;top:519.73px;width:1283px;height:14.79px;background:#f3f3f3"></div>
<div style="left:296px;top:549.31px;width:1283px;height:14.79px;background:#f3f3f3"></div>
<div style="left:296px;top:578px;width:1283px;height:12.600000000000023px;background:#f3f3f3"></div>
<div style="left:296px;top:604.4px;width:1283px;height:13.100000000000023px;background:#f3f3f3"></div>
<div style="left:296px;top:631.6px;width:1283px;height:12.899999999999977px;background:#f3f3f3"></div>
<div style="left:311px;top:120.4px;width:1px;height:524.1px;background:#e2e2e2"></div>
<div style="left:344px;top:120.4px;width:1px;height:524.1px;background:#e2e2e2"></div>
<div style="left:395px;top:120.4px;width:1px;height:524.1px;background:#e2e2e2"></div>
<div style="left:442px;top:120.4px;width:1px;height:524.1px;background:#e2e2e2"></div>
<div style="left:488px;top:120.4px;width:1px;height:524.1px;background:#e2e2e2"></div>
<div style="left:546px;top:120.4px;width:1px;height:524.1px;background:#e2e2e2"></div>
<div style="left:584px;top:120.4px;width:1px;height:524.1px;background:#e2e2e2"></div>
<div style="left:638px;top:120.4px;width:1px;height:524.1px;background:#e2e2e2"></div>
<div style="left:675px;top:120.4px;width:1px;height:524.1px;background:#e2e2e2"></div>
<div style="left:721px;top:120.4px;width:1px;height:524.1px;background:#e2e2e2"></div>
<div style="left:764px;top:120.4px;width:1px;height:524.1px;background:#e2e2e2"></div>
<div style="left:792px;top:120.4px;width:1px;height:524.1px;background:#e2e2e2"></div>
<div style="left:828px;top:120.4px;width:1px;height:524.1px;background:#e2e2e2"></div>
<div style="left:861px;top:120.4px;width:1px;height:524.1px;background:#e2e2e2"></div>
<div style="left:915px;top:120.4px;width:1px;height:524.1px;background:#e2e2e2"></div>
<div style="left:947px;top:120.4px;width:1px;height:524.1px;background:#e2e2e2"></div>
<div style="left:1089px;top:120.4px;width:1px;height:524.1px;background:#e2e2e2"></div>
<div style="left:1128px;top:120.4px;width:1px;height:524.1px;background:#e2e2e2"></div>
<div style="left:1178px;top:120.4px;width:1px;height:524.1px;background:#e2e2e2"></div>
<div style="left:1246px;top:120.4px;width:1px;height:524.1px;background:#e2e2e2"></div>
<div style="left:1292px;top:120.4px;width:1px;height:524.1px;background:#e2e2e2"></div>
<div style="left:1361px;top:120.4px;width:1px;height:524.1px;background:#e2e2e2"></div>
<div style="left:1432px;top:120.4px;width:1px;height:524.1px;background:#e2e2e2"></div>
<div style="left:1508px;top:120.4px;width:1px;height:524.1px;background:#e2e2e2"></div>
<div style="left:296px;top:95px;width:1283px;height:25.400000000000006px;background:#79acdb"></div>
<div style="left:311px;top:95px;width:1px;height:25.400000000000006px;background:#9da9b4"></div>
<div style="left:312px;top:95px;width:0.8px;height:25.400000000000006px;background:#cfe2f3"></div>
<div style="left:312px;top:95px;width:32px;height:25.400000000000006px;line-height:25.400000000000006px;text-align:center;overflow:hidden;font-size:7.8px;font-weight:bold;color:#fff;text-overflow:clip">Mes</div>
<div style="left:344px;top:95px;width:1px;height:25.400000000000006px;background:#9da9b4"></div>
<div style="left:345px;top:95px;width:0.8px;height:25.400000000000006px;background:#cfe2f3"></div>
<div style="left:345px;top:95px;width:50px;height:25.400000000000006px;line-height:25.400000000000006px;text-align:center;overflow:hidden;font-size:7.8px;font-weight:bold;color:#fff;text-overflow:clip">N° de Orden</div>
<div style="left:395px;top:95px;width:1px;height:25.400000000000006px;background:#9da9b4"></div>
<div style="left:396px;top:95px;width:0.8px;height:25.400000000000006px;background:#cfe2f3"></div>
<div style="left:396px;top:95px;width:46px;height:25.400000000000006px;line-height:25.400000000000006px;text-align:center;overflow:hidden;font-size:7.8px;font-weight:bold;color:#fff;text-overflow:clip">F. Creación</div>
<div style="left:442px;top:95px;width:1px;height:25.400000000000006px;background:#9da9b4"></div>
<div style="left:443px;top:95px;width:0.8px;height:25.400000000000006px;background:#cfe2f3"></div>
<div style="left:443px;top:95px;width:45px;height:25.400000000000006px;line-height:25.400000000000006px;text-align:center;overflow:hidden;font-size:7.8px;font-weight:bold;color:#fff;text-overflow:clip">Nº de Pauta</div>
<div style="left:488px;top:95px;width:1px;height:25.400000000000006px;background:#9da9b4"></div>
<div style="left:489px;top:95px;width:0.8px;height:25.400000000000006px;background:#cfe2f3"></div>
<div style="left:489px;top:95px;width:57px;height:25.400000000000006px;line-height:25.400000000000006px;text-align:center;overflow:hidden;font-size:7.8px;font-weight:bold;color:#fff;text-overflow:clip">Job Number</div>
<div style="left:546px;top:95px;width:1px;height:25.400000000000006px;background:#9da9b4"></div>
<div style="left:547px;top:95px;width:0.8px;height:25.400000000000006px;background:#cfe2f3"></div>
<div style="left:547px;top:95px;width:37px;height:25.400000000000006px;line-height:25.400000000000006px;text-align:center;overflow:hidden;font-size:7.8px;font-weight:bold;color:#fff;text-overflow:clip">Medida</div>
<div style="left:584px;top:95px;width:1px;height:25.400000000000006px;background:#9da9b4"></div>
<div style="left:585px;top:95px;width:0.8px;height:25.400000000000006px;background:#cfe2f3"></div>
<div style="left:585px;top:95px;width:53px;height:25.400000000000006px;line-height:25.400000000000006px;text-align:center;overflow:hidden;font-size:7.8px;font-weight:bold;color:#fff;text-overflow:clip">Importe</div>
<div style="left:638px;top:95px;width:1px;height:25.400000000000006px;background:#9da9b4"></div>
<div style="left:639px;top:95px;width:0.8px;height:25.400000000000006px;background:#cfe2f3"></div>
<div style="left:639px;top:95px;width:36px;height:25.400000000000006px;line-height:25.400000000000006px;text-align:center;overflow:hidden;font-size:7.8px;font-weight:bold;color:#fff;text-overflow:clip">ME</div>
<div style="left:675px;top:95px;width:1px;height:25.400000000000006px;background:#9da9b4"></div>
<div style="left:676px;top:95px;width:0.8px;height:25.400000000000006px;background:#cfe2f3"></div>
<div style="left:676px;top:95px;width:45px;height:25.400000000000006px;line-height:25.400000000000006px;text-align:center;overflow:hidden;font-size:7.8px;font-weight:bold;color:#fff;text-overflow:clip">Importe ME</div>
<div style="left:721px;top:95px;width:1px;height:25.400000000000006px;background:#9da9b4"></div>
<div style="left:722px;top:95px;width:0.8px;height:25.400000000000006px;background:#cfe2f3"></div>
<div style="left:722px;top:95px;width:42px;height:25.400000000000006px;line-height:25.400000000000006px;text-align:center;overflow:hidden;font-size:7.8px;font-weight:bold;color:#fff;text-overflow:clip">Cotización</div>
<div style="left:764px;top:95px;width:1px;height:25.400000000000006px;background:#9da9b4"></div>
<div style="left:765px;top:95px;width:0.8px;height:25.400000000000006px;background:#cfe2f3"></div>
<div style="left:765px;top:95px;width:27px;height:25.400000000000006px;line-height:25.400000000000006px;text-align:center;overflow:hidden;font-size:7.8px;font-weight:bold;color:#fff;text-overflow:clip">Copias</div>
<div style="left:792px;top:95px;width:1px;height:25.400000000000006px;background:#9da9b4"></div>
<div style="left:793px;top:95px;width:0.8px;height:25.400000000000006px;background:#cfe2f3"></div>
<div style="left:793px;top:95px;width:35px;height:25.400000000000006px;line-height:25.400000000000006px;text-align:center;overflow:hidden;font-size:7.8px;font-weight:bold;color:#fff;text-overflow:clip">Revisión</div>
<div style="left:828px;top:95px;width:1px;height:25.400000000000006px;background:#9da9b4"></div>
<div style="left:829px;top:95px;width:0.8px;height:25.400000000000006px;background:#cfe2f3"></div>
<div style="left:829px;top:95px;width:32px;height:25.400000000000006px;line-height:25.400000000000006px;text-align:center;overflow:hidden;font-size:7.8px;font-weight:bold;color:#fff;text-overflow:clip">Impresa</div>
<div style="left:861px;top:95px;width:1px;height:25.400000000000006px;background:#9da9b4"></div>
<div style="left:862px;top:95px;width:0.8px;height:25.400000000000006px;background:#cfe2f3"></div>
<div style="left:862px;top:95px;width:53px;height:25.400000000000006px;line-height:25.400000000000006px;text-align:center;overflow:hidden;font-size:7.8px;font-weight:bold;color:#fff;text-overflow:clip">Estado Orden</div>
<div style="left:915px;top:95px;width:1px;height:25.400000000000006px;background:#9da9b4"></div>
<div style="left:916px;top:95px;width:0.8px;height:25.400000000000006px;background:#cfe2f3"></div>
<div style="left:916px;top:95px;width:31px;height:25.400000000000006px;line-height:25.400000000000006px;text-align:center;overflow:hidden;font-size:7.8px;font-weight:bold;color:#fff;text-overflow:clip">Control</div>
<div style="left:947px;top:95px;width:1px;height:25.400000000000006px;background:#9da9b4"></div>
<div style="left:948px;top:95px;width:0.8px;height:25.400000000000006px;background:#cfe2f3"></div>
<div style="left:948px;top:95px;width:141px;height:25.400000000000006px;line-height:25.400000000000006px;text-align:center;overflow:hidden;font-size:7.8px;font-weight:bold;color:#fff;text-overflow:clip">N/Crédito Devolución Comision Prov.</div>
<div style="left:1089px;top:95px;width:1px;height:25.400000000000006px;background:#9da9b4"></div>
<div style="left:1090px;top:95px;width:0.8px;height:25.400000000000006px;background:#cfe2f3"></div>
<div style="left:1090px;top:95px;width:38px;height:25.400000000000006px;line-height:25.400000000000006px;text-align:center;overflow:hidden;font-size:7.8px;font-weight:bold;color:#fff;text-overflow:clip">Cobranza</div>
<div style="left:1128px;top:95px;width:1px;height:25.400000000000006px;background:#9da9b4"></div>
<div style="left:1129px;top:95px;width:0.8px;height:25.400000000000006px;background:#cfe2f3"></div>
<div style="left:1129px;top:95px;width:49px;height:25.400000000000006px;line-height:25.400000000000006px;text-align:center;overflow:hidden;font-size:7.8px;font-weight:bold;color:#fff;text-overflow:clip">N° Ped. Esp.</div>
<div style="left:1178px;top:95px;width:1px;height:25.400000000000006px;background:#9da9b4"></div>
<div style="left:1179px;top:95px;width:0.8px;height:25.400000000000006px;background:#cfe2f3"></div>
<div style="left:1179px;top:95px;width:67px;height:25.400000000000006px;line-height:25.400000000000006px;text-align:center;overflow:hidden;font-size:7.8px;font-weight:bold;color:#fff;text-overflow:clip">Tipo Facturación</div>
<div style="left:1246px;top:95px;width:1px;height:25.400000000000006px;background:#9da9b4"></div>
<div style="left:1247px;top:95px;width:0.8px;height:25.400000000000006px;background:#cfe2f3"></div>
<div style="left:1247px;top:95px;width:45px;height:25.400000000000006px;line-height:25.400000000000006px;text-align:center;overflow:hidden;font-size:7.8px;font-weight:bold;color:#fff;text-overflow:clip">Productora</div>
<div style="left:1292px;top:95px;width:1px;height:25.400000000000006px;background:#9da9b4"></div>
<div style="left:1293px;top:95px;width:0.8px;height:25.400000000000006px;background:#cfe2f3"></div>
<div style="left:1293px;top:95px;width:68px;height:25.400000000000006px;line-height:25.400000000000006px;text-align:center;overflow:hidden;font-size:7.8px;font-weight:bold;color:#fff;text-overflow:clip">Nº Pedido Cliente</div>
<div style="left:1361px;top:95px;width:1px;height:25.400000000000006px;background:#9da9b4"></div>
<div style="left:1362px;top:95px;width:0.8px;height:25.400000000000006px;background:#cfe2f3"></div>
<div style="left:1362px;top:95px;width:70px;height:25.400000000000006px;line-height:25.400000000000006px;text-align:center;overflow:hidden;font-size:7.8px;font-weight:bold;color:#fff;text-overflow:clip">Nº Conciliación</div>
<div style="left:1432px;top:95px;width:1px;height:25.400000000000006px;background:#9da9b4"></div>
<div style="left:1433px;top:95px;width:0.8px;height:25.400000000000006px;background:#cfe2f3"></div>
<div style="left:1433px;top:95px;width:75px;height:25.400000000000006px;line-height:25.400000000000006px;text-align:center;overflow:hidden;font-size:7.8px;font-weight:bold;color:#fff;text-overflow:clip">Fecha Conciliación</div>
<div style="left:1508px;top:95px;width:1px;height:25.400000000000006px;background:#9da9b4"></div>
<div style="left:1509px;top:95px;width:0.8px;height:25.400000000000006px;background:#cfe2f3"></div>
<div style="left:1509px;top:95px;width:70px;height:25.400000000000006px;line-height:25.400000000000006px;text-align:center;overflow:hidden;font-size:7.8px;font-weight:bold;color:#fff;text-overflow:clip">Nº Orden Televisa</div>
<div style="left:296px;top:120px;width:1283px;height:1px;background:#a0a0a0"></div>
<div style="left:296px;top:95px;width:1px;height:572px;background:#a8b0b8"></div>
<div style="left:1579px;top:95px;width:1px;height:549.5px;background:#a8a8a8"></div>
<div style="left:296px;top:644px;width:1284px;height:1px;background:#b4b4b4"></div>
<div style="left:299.20px;top:123.30px;width:9px;height:9px;border:1px solid #4a75a0;border-radius:1px;background:linear-gradient(135deg,#f4f4f4,#dcdcdc)"></div>
<div style="left:313.00px;top:121.30px;height:12px;line-height:12px;font-size:8.4px;color:#383838;transform:scaleX(0.971);transform-origin:0 50%;">01/2025</div>
<div style="left:361.14px;top:121.30px;height:12px;line-height:12px;font-size:8.4px;color:#383838;transform:scaleX(0.895);transform-origin:0 50%;">2551</div>
<div style="left:397.00px;top:121.30px;height:12px;line-height:12px;font-size:8.4px;color:#383838;transform:scaleX(1.005);transform-origin:0 50%;">20/05/2025</div>
<div style="left:456.64px;top:121.30px;height:12px;line-height:12px;font-size:8.4px;color:#383838;transform:scaleX(0.895);transform-origin:0 50%;">1000</div>
<div style="left:491.92px;top:121.30px;height:12px;line-height:12px;font-size:8.4px;color:#383838;transform:scaleX(0.846);transform-origin:0 50%;">IPO5G5A10002</div>
<div style="left:567.76px;top:121.30px;height:12px;line-height:12px;font-size:8.4px;color:#383838;transform:scaleX(0.932);transform-origin:0 50%;">1.00</div>
<div style="left:606.52px;top:121.30px;height:12px;line-height:12px;font-size:8.4px;color:#383838;transform:scaleX(0.932);transform-origin:0 50%;">9,233.95</div>
<div style="left:704.76px;top:121.30px;height:12px;line-height:12px;font-size:8.4px;color:#383838;transform:scaleX(0.932);transform-origin:0 50%;">0.00</div>
<div style="left:739.40px;top:121.30px;height:12px;line-height:12px;font-size:8.4px;color:#383838;transform:scaleX(0.919);transform-origin:0 50%;">0.0000</div>
<div style="left:786.82px;top:121.30px;height:12px;line-height:12px;font-size:8.4px;color:#383838;transform:scaleX(0.895);transform-origin:0 50%;">1</div>
<div style="left:794.00px;top:121.30px;height:12px;line-height:12px;font-size:8.4px;color:#383838;transform:scaleX(0.895);transform-origin:0 50%;">000</div>
<div style="left:840.30px;top:123.30px;width:9px;height:9px;border:1px solid #4a75a0;border-radius:1px;background:linear-gradient(135deg,#f4f4f4,#dcdcdc)"></div>
<svg style="left:841.80px;top:125.30px" width="6" height="5"><path d="M0.4 2.6 L2.2 4.3 L5.6 0.5" stroke="#1a9a1a" stroke-width="1.5" fill="none"/></svg>
<div style="left:872.35px;top:121.30px;height:12px;line-height:12px;font-size:8.4px;color:#383838;transform:scaleX(0.762);transform-origin:0 50%;">CERRADA</div>
<div style="left:926.50px;top:123.30px;width:9px;height:9px;border:1px solid #4a75a0;border-radius:1px;background:linear-gradient(135deg,#f4f4f4,#dcdcdc)"></div>
<div style="left:1140.46px;top:121.30px;height:12px;line-height:12px;font-size:8.4px;color:#383838;transform:scaleX(0.895);transform-origin:0 50%;">000000</div>
<div style="left:1180.00px;top:121.30px;height:12px;line-height:12px;font-size:8.4px;color:#383838;transform:scaleX(0.792);transform-origin:0 50%;">DIRECTA</div>
<div style="left:1303.30px;top:121.30px;height:12px;line-height:12px;font-size:8.4px;color:#383838;transform:scaleX(0.838);transform-origin:0 50%;">ININMM5G117</div>
<div style="left:299.20px;top:138.09px;width:9px;height:9px;border:1px solid #4a75a0;border-radius:1px;background:linear-gradient(135deg,#f4f4f4,#dcdcdc)"></div>
<div style="left:313.00px;top:136.09px;height:12px;line-height:12px;font-size:8.4px;color:#383838;transform:scaleX(0.971);transform-origin:0 50%;">01/2025</div>
<div style="left:361.14px;top:136.09px;height:12px;line-height:12px;font-size:8.4px;color:#383838;transform:scaleX(0.895);transform-origin:0 50%;">2557</div>
<div style="left:397.00px;top:136.09px;height:12px;line-height:12px;font-size:8.4px;color:#383838;transform:scaleX(1.005);transform-origin:0 50%;">21/05/2025</div>
<div style="left:456.64px;top:136.09px;height:12px;line-height:12px;font-size:8.4px;color:#383838;transform:scaleX(0.895);transform-origin:0 50%;">0515</div>
<div style="left:491.30px;top:136.09px;height:12px;line-height:12px;font-size:8.4px;color:#383838;transform:scaleX(0.821);transform-origin:0 50%;">SVVOP5A10001</div>
<div style="left:567.76px;top:136.09px;height:12px;line-height:12px;font-size:8.4px;color:#383838;transform:scaleX(0.932);transform-origin:0 50%;">1.00</div>
<div style="left:602.34px;top:136.09px;height:12px;line-height:12px;font-size:8.4px;color:#383838;transform:scaleX(0.927);transform-origin:0 50%;">66,000.00</div>
<div style="left:704.76px;top:136.09px;height:12px;line-height:12px;font-size:8.4px;color:#383838;transform:scaleX(0.932);transform-origin:0 50%;">0.00</div>
<div style="left:739.40px;top:136.09px;height:12px;line-height:12px;font-size:8.4px;color:#383838;transform:scaleX(0.919);transform-origin:0 50%;">0.0000</div>
<div style="left:786.82px;top:136.09px;height:12px;line-height:12px;font-size:8.4px;color:#383838;transform:scaleX(0.895);transform-origin:0 50%;">1</div>
<div style="left:794.00px;top:136.09px;height:12px;line-height:12px;font-size:8.4px;color:#383838;transform:scaleX(0.895);transform-origin:0 50%;">000</div>
<div style="left:840.30px;top:138.09px;width:9px;height:9px;border:1px solid #4a75a0;border-radius:1px;background:linear-gradient(135deg,#f4f4f4,#dcdcdc)"></div>
<div style="left:872.35px;top:136.09px;height:12px;line-height:12px;font-size:8.4px;color:#383838;transform:scaleX(0.762);transform-origin:0 50%;">CERRADA</div>
<div style="left:926.50px;top:138.09px;width:9px;height:9px;border:1px solid #4a75a0;border-radius:1px;background:linear-gradient(135deg,#f4f4f4,#dcdcdc)"></div>
<div style="left:1140.46px;top:136.09px;height:12px;line-height:12px;font-size:8.4px;color:#383838;transform:scaleX(0.895);transform-origin:0 50%;">000000</div>
<div style="left:1180.00px;top:136.09px;height:12px;line-height:12px;font-size:8.4px;color:#383838;transform:scaleX(0.792);transform-origin:0 50%;">DIRECTA</div>
<div style="left:1302.31px;top:136.09px;height:12px;line-height:12px;font-size:8.4px;color:#383838;transform:scaleX(0.803);transform-origin:0 50%;">COPSOPX8227</div>
<div style="left:299.20px;top:152.88px;width:9px;height:9px;border:1px solid #4a75a0;border-radius:1px;background:linear-gradient(135deg,#f4f4f4,#dcdcdc)"></div>
<div style="left:313.00px;top:150.88px;height:12px;line-height:12px;font-size:8.4px;color:#383838;transform:scaleX(0.971);transform-origin:0 50%;">01/2025</div>
<div style="left:361.14px;top:150.88px;height:12px;line-height:12px;font-size:8.4px;color:#383838;transform:scaleX(0.895);transform-origin:0 50%;">2557</div>
<div style="left:397.00px;top:150.88px;height:12px;line-height:12px;font-size:8.4px;color:#383838;transform:scaleX(1.005);transform-origin:0 50%;">21/05/2025</div>
<div style="left:456.64px;top:150.88px;height:12px;line-height:12px;font-size:8.4px;color:#383838;transform:scaleX(0.895);transform-origin:0 50%;">0515</div>
<div style="left:491.30px;top:150.88px;height:12px;line-height:12px;font-size:8.4px;color:#383838;transform:scaleX(0.821);transform-origin:0 50%;">SVVOP5A10001</div>
<div style="left:567.76px;top:150.88px;height:12px;line-height:12px;font-size:8.4px;color:#383838;transform:scaleX(0.932);transform-origin:0 50%;">1.00</div>
<div style="left:606.52px;top:150.88px;height:12px;line-height:12px;font-size:8.4px;color:#383838;transform:scaleX(0.932);transform-origin:0 50%;">8,250.00</div>
<div style="left:704.76px;top:150.88px;height:12px;line-height:12px;font-size:8.4px;color:#383838;transform:scaleX(0.932);transform-origin:0 50%;">0.00</div>
<div style="left:739.40px;top:150.88px;height:12px;line-height:12px;font-size:8.4px;color:#383838;transform:scaleX(0.919);transform-origin:0 50%;">0.0000</div>
<div style="left:786.82px;top:150.88px;height:12px;line-height:12px;font-size:8.4px;color:#383838;transform:scaleX(0.895);transform-origin:0 50%;">1</div>
<div style="left:794.00px;top:150.88px;height:12px;line-height:12px;font-size:8.4px;color:#383838;transform:scaleX(0.895);transform-origin:0 50%;">000</div>
<div style="left:840.30px;top:152.88px;width:9px;height:9px;border:1px solid #4a75a0;border-radius:1px;background:linear-gradient(135deg,#f4f4f4,#dcdcdc)"></div>
<div style="left:872.35px;top:150.88px;height:12px;line-height:12px;font-size:8.4px;color:#383838;transform:scaleX(0.762);transform-origin:0 50%;">CERRADA</div>
<div style="left:926.50px;top:152.88px;width:9px;height:9px;border:1px solid #4a75a0;border-radius:1px;background:linear-gradient(135deg,#f4f4f4,#dcdcdc)"></div>
<div style="left:1140.46px;top:150.88px;height:12px;line-height:12px;font-size:8.4px;color:#383838;transform:scaleX(0.895);transform-origin:0 50%;">000000</div>
<div style="left:1180.00px;top:150.88px;height:12px;line-height:12px;font-size:8.4px;color:#383838;transform:scaleX(0.792);transform-origin:0 50%;">DIRECTA</div>
<div style="left:1302.31px;top:150.88px;height:12px;line-height:12px;font-size:8.4px;color:#383838;transform:scaleX(0.803);transform-origin:0 50%;">COPSOPX8227</div>
<div style="left:299.20px;top:167.67px;width:9px;height:9px;border:1px solid #4a75a0;border-radius:1px;background:linear-gradient(135deg,#f4f4f4,#dcdcdc)"></div>
<div style="left:313.00px;top:165.67px;height:12px;line-height:12px;font-size:8.4px;color:#383838;transform:scaleX(0.971);transform-origin:0 50%;">01/2025</div>
<div style="left:361.14px;top:165.67px;height:12px;line-height:12px;font-size:8.4px;color:#383838;transform:scaleX(0.895);transform-origin:0 50%;">2560</div>
<div style="left:397.00px;top:165.67px;height:12px;line-height:12px;font-size:8.4px;color:#383838;transform:scaleX(1.005);transform-origin:0 50%;">23/05/2025</div>
<div style="left:456.64px;top:165.67px;height:12px;line-height:12px;font-size:8.4px;color:#383838;transform:scaleX(0.895);transform-origin:0 50%;">0358</div>
<div style="left:491.17px;top:165.67px;height:12px;line-height:12px;font-size:8.4px;color:#383838;transform:scaleX(0.832);transform-origin:0 50%;">RE7PO5A10001</div>
<div style="left:563.58px;top:165.67px;height:12px;line-height:12px;font-size:8.4px;color:#383838;transform:scaleX(0.924);transform-origin:0 50%;">20.00</div>
<div style="left:617.58px;top:165.67px;height:12px;line-height:12px;font-size:8.4px;color:#383838;transform:scaleX(0.952);transform-origin:0 50%;">11.00</div>
<div style="left:704.76px;top:165.67px;height:12px;line-height:12px;font-size:8.4px;color:#383838;transform:scaleX(0.932);transform-origin:0 50%;">0.00</div>
<div style="left:739.40px;top:165.67px;height:12px;line-height:12px;font-size:8.4px;color:#383838;transform:scaleX(0.919);transform-origin:0 50%;">1.0000</div>
<div style="left:786.82px;top:165.67px;height:12px;line-height:12px;font-size:8.4px;color:#383838;transform:scaleX(0.895);transform-origin:0 50%;">1</div>
<div style="left:794.00px;top:165.67px;height:12px;line-height:12px;font-size:8.4px;color:#383838;transform:scaleX(0.895);transform-origin:0 50%;">001</div>
<div style="left:840.30px;top:167.67px;width:9px;height:9px;border:1px solid #4a75a0;border-radius:1px;background:linear-gradient(135deg,#f4f4f4,#dcdcdc)"></div>
<svg style="left:841.80px;top:169.67px" width="6" height="5"><path d="M0.4 2.6 L2.2 4.3 L5.6 0.5" stroke="#1a9a1a" stroke-width="1.5" fill="none"/></svg>
<div style="left:872.35px;top:165.67px;height:12px;line-height:12px;font-size:8.4px;color:#383838;transform:scaleX(0.762);transform-origin:0 50%;">CERRADA</div>
<div style="left:926.50px;top:167.67px;width:9px;height:9px;border:1px solid #4a75a0;border-radius:1px;background:linear-gradient(135deg,#f4f4f4,#dcdcdc)"></div>
<div style="left:1140.46px;top:165.67px;height:12px;line-height:12px;font-size:8.4px;color:#383838;transform:scaleX(0.895);transform-origin:0 50%;">000000</div>
<div style="left:1180.00px;top:165.67px;height:12px;line-height:12px;font-size:8.4px;color:#383838;transform:scaleX(0.792);transform-origin:0 50%;">DIRECTA</div>
<div style="left:1305.16px;top:165.67px;height:12px;line-height:12px;font-size:8.4px;color:#383838;transform:scaleX(0.819);transform-origin:0 50%;">PRPEPA0010</div>
<div style="left:299.20px;top:182.46px;width:9px;height:9px;border:1px solid #4a75a0;border-radius:1px;background:linear-gradient(135deg,#f4f4f4,#dcdcdc)"></div>
<div style="left:313.00px;top:180.46px;height:12px;line-height:12px;font-size:8.4px;color:#383838;transform:scaleX(0.971);transform-origin:0 50%;">01/2025</div>
<div style="left:361.14px;top:180.46px;height:12px;line-height:12px;font-size:8.4px;color:#383838;transform:scaleX(0.895);transform-origin:0 50%;">2561</div>
<div style="left:397.00px;top:180.46px;height:12px;line-height:12px;font-size:8.4px;color:#383838;transform:scaleX(1.005);transform-origin:0 50%;">23/05/2025</div>
<div style="left:456.64px;top:180.46px;height:12px;line-height:12px;font-size:8.4px;color:#383838;transform:scaleX(0.895);transform-origin:0 50%;">0107</div>
<div style="left:490.99px;top:180.46px;height:12px;line-height:12px;font-size:8.4px;color:#383838;transform:scaleX(0.831);transform-origin:0 50%;">RE3AM5A10002</div>
<div style="left:559.40px;top:180.46px;height:12px;line-height:12px;font-size:8.4px;color:#383838;transform:scaleX(0.919);transform-origin:0 50%;">560.00</div>
<div style="left:602.34px;top:180.46px;height:12px;line-height:12px;font-size:8.4px;color:#383838;transform:scaleX(0.943);transform-origin:0 50%;">11,013.65</div>
<div style="left:704.76px;top:180.46px;height:12px;line-height:12px;font-size:8.4px;color:#383838;transform:scaleX(0.932);transform-origin:0 50%;">0.00</div>
<div style="left:739.40px;top:180.46px;height:12px;line-height:12px;font-size:8.4px;color:#383838;transform:scaleX(0.919);transform-origin:0 50%;">1.0000</div>
<div style="left:786.82px;top:180.46px;height:12px;line-height:12px;font-size:8.4px;color:#383838;transform:scaleX(0.895);transform-origin:0 50%;">1</div>
<div style="left:794.00px;top:180.46px;height:12px;line-height:12px;font-size:8.4px;color:#383838;transform:scaleX(0.895);transform-origin:0 50%;">001</div>
<div style="left:840.30px;top:182.46px;width:9px;height:9px;border:1px solid #4a75a0;border-radius:1px;background:linear-gradient(135deg,#f4f4f4,#dcdcdc)"></div>
<div style="left:872.35px;top:180.46px;height:12px;line-height:12px;font-size:8.4px;color:#383838;transform:scaleX(0.762);transform-origin:0 50%;">CERRADA</div>
<div style="left:926.50px;top:182.46px;width:9px;height:9px;border:1px solid #4a75a0;border-radius:1px;background:linear-gradient(135deg,#f4f4f4,#dcdcdc)"></div>
<div style="left:1140.46px;top:180.46px;height:12px;line-height:12px;font-size:8.4px;color:#383838;transform:scaleX(0.895);transform-origin:0 50%;">000000</div>
<div style="left:1180.00px;top:180.46px;height:12px;line-height:12px;font-size:8.4px;color:#383838;transform:scaleX(0.792);transform-origin:0 50%;">DIRECTA</div>
<div style="left:1307.25px;top:180.46px;height:12px;line-height:12px;font-size:8.4px;color:#383838;transform:scaleX(0.801);transform-origin:0 50%;">PRPEAK004</div>
<div style="left:299.20px;top:197.25px;width:9px;height:9px;border:1px solid #4a75a0;border-radius:1px;background:linear-gradient(135deg,#f4f4f4,#dcdcdc)"></div>
<div style="left:313.00px;top:195.25px;height:12px;line-height:12px;font-size:8.4px;color:#383838;transform:scaleX(0.971);transform-origin:0 50%;">01/2025</div>
<div style="left:361.14px;top:195.25px;height:12px;line-height:12px;font-size:8.4px;color:#383838;transform:scaleX(0.895);transform-origin:0 50%;">2562</div>
<div style="left:397.00px;top:195.25px;height:12px;line-height:12px;font-size:8.4px;color:#383838;transform:scaleX(1.005);transform-origin:0 50%;">23/05/2025</div>
<div style="left:456.64px;top:195.25px;height:12px;line-height:12px;font-size:8.4px;color:#383838;transform:scaleX(0.895);transform-origin:0 50%;">0107</div>
<div style="left:490.99px;top:195.25px;height:12px;line-height:12px;font-size:8.4px;color:#383838;transform:scaleX(0.831);transform-origin:0 50%;">RE3AM5A10002</div>
<div style="left:563.58px;top:195.25px;height:12px;line-height:12px;font-size:8.4px;color:#383838;transform:scaleX(0.924);transform-origin:0 50%;">20.00</div>
<div style="left:613.40px;top:195.25px;height:12px;line-height:12px;font-size:8.4px;color:#383838;transform:scaleX(0.919);transform-origin:0 50%;">382.35</div>
<div style="left:704.76px;top:195.25px;height:12px;line-height:12px;font-size:8.4px;color:#383838;transform:scaleX(0.932);transform-origin:0 50%;">0.00</div>
<div style="left:739.40px;top:195.25px;height:12px;line-height:12px;font-size:8.4px;color:#383838;transform:scaleX(0.919);transform-origin:0 50%;">1.0000</div>
<div style="left:786.82px;top:195.25px;height:12px;line-height:12px;font-size:8.4px;color:#383838;transform:scaleX(0.895);transform-origin:0 50%;">1</div>
<div style="left:794.00px;top:195.25px;height:12px;line-height:12px;font-size:8.4px;color:#383838;transform:scaleX(0.895);transform-origin:0 50%;">001</div>
<div style="left:840.30px;top:197.25px;width:9px;height:9px;border:1px solid #4a75a0;border-radius:1px;background:linear-gradient(135deg,#f4f4f4,#dcdcdc)"></div>
<div style="left:872.35px;top:195.25px;height:12px;line-height:12px;font-size:8.4px;color:#383838;transform:scaleX(0.762);transform-origin:0 50%;">CERRADA</div>
<div style="left:926.50px;top:197.25px;width:9px;height:9px;border:1px solid #4a75a0;border-radius:1px;background:linear-gradient(135deg,#f4f4f4,#dcdcdc)"></div>
<div style="left:1140.46px;top:195.25px;height:12px;line-height:12px;font-size:8.4px;color:#383838;transform:scaleX(0.895);transform-origin:0 50%;">000000</div>
<div style="left:1180.00px;top:195.25px;height:12px;line-height:12px;font-size:8.4px;color:#383838;transform:scaleX(0.792);transform-origin:0 50%;">DIRECTA</div>
<div style="left:1307.25px;top:195.25px;height:12px;line-height:12px;font-size:8.4px;color:#383838;transform:scaleX(0.801);transform-origin:0 50%;">PRPEAK004</div>
<div style="left:299.20px;top:212.03px;width:9px;height:9px;border:1px solid #4a75a0;border-radius:1px;background:linear-gradient(135deg,#f4f4f4,#dcdcdc)"></div>
<div style="left:313.00px;top:210.03px;height:12px;line-height:12px;font-size:8.4px;color:#383838;transform:scaleX(0.971);transform-origin:0 50%;">01/2025</div>
<div style="left:361.14px;top:210.03px;height:12px;line-height:12px;font-size:8.4px;color:#383838;transform:scaleX(0.895);transform-origin:0 50%;">2564</div>
<div style="left:397.00px;top:210.03px;height:12px;line-height:12px;font-size:8.4px;color:#383838;transform:scaleX(1.005);transform-origin:0 50%;">27/05/2025</div>
<div style="left:456.64px;top:210.03px;height:12px;line-height:12px;font-size:8.4px;color:#383838;transform:scaleX(0.895);transform-origin:0 50%;">0059</div>
<div style="left:491.66px;top:210.03px;height:12px;line-height:12px;font-size:8.4px;color:#383838;transform:scaleX(0.822);transform-origin:0 50%;">LR5OP5AF0001</div>
<div style="left:567.76px;top:210.03px;height:12px;line-height:12px;font-size:8.4px;color:#383838;transform:scaleX(0.932);transform-origin:0 50%;">1.00</div>
<div style="left:598.16px;top:210.03px;height:12px;line-height:12px;font-size:8.4px;color:#383838;transform:scaleX(0.924);transform-origin:0 50%;">209,637.00</div>
<div style="left:704.76px;top:210.03px;height:12px;line-height:12px;font-size:8.4px;color:#383838;transform:scaleX(0.932);transform-origin:0 50%;">0.00</div>
<div style="left:739.40px;top:210.03px;height:12px;line-height:12px;font-size:8.4px;color:#383838;transform:scaleX(0.919);transform-origin:0 50%;">0.0000</div>
<div style="left:786.82px;top:210.03px;height:12px;line-height:12px;font-size:8.4px;color:#383838;transform:scaleX(0.895);transform-origin:0 50%;">1</div>
<div style="left:794.00px;top:210.03px;height:12px;line-height:12px;font-size:8.4px;color:#383838;transform:scaleX(0.895);transform-origin:0 50%;">000</div>
<div style="left:840.30px;top:212.03px;width:9px;height:9px;border:1px solid #4a75a0;border-radius:1px;background:linear-gradient(135deg,#f4f4f4,#dcdcdc)"></div>
<svg style="left:841.80px;top:214.03px" width="6" height="5"><path d="M0.4 2.6 L2.2 4.3 L5.6 0.5" stroke="#1a9a1a" stroke-width="1.5" fill="none"/></svg>
<div style="left:872.35px;top:210.03px;height:12px;line-height:12px;font-size:8.4px;color:#383838;transform:scaleX(0.762);transform-origin:0 50%;">CERRADA</div>
<div style="left:926.50px;top:212.03px;width:9px;height:9px;border:1px solid #4a75a0;border-radius:1px;background:linear-gradient(135deg,#f4f4f4,#dcdcdc)"></div>
<div style="left:1140.46px;top:210.03px;height:12px;line-height:12px;font-size:8.4px;color:#383838;transform:scaleX(0.895);transform-origin:0 50%;">000000</div>
<div style="left:1180.00px;top:210.03px;height:12px;line-height:12px;font-size:8.4px;color:#383838;transform:scaleX(0.792);transform-origin:0 50%;">DIRECTA</div>
<div style="left:1306.89px;top:210.03px;height:12px;line-height:12px;font-size:8.4px;color:#383838;transform:scaleX(0.800);transform-origin:0 50%;">CPPPOP001</div>
<div style="left:299.20px;top:226.83px;width:9px;height:9px;border:1px solid #4a75a0;border-radius:1px;background:linear-gradient(135deg,#f4f4f4,#dcdcdc)"></div>
<div style="left:313.00px;top:224.83px;height:12px;line-height:12px;font-size:8.4px;color:#383838;transform:scaleX(0.971);transform-origin:0 50%;">01/2025</div>
<div style="left:361.14px;top:224.83px;height:12px;line-height:12px;font-size:8.4px;color:#383838;transform:scaleX(0.895);transform-origin:0 50%;">2565</div>
<div style="left:397.00px;top:224.83px;height:12px;line-height:12px;font-size:8.4px;color:#383838;transform:scaleX(1.005);transform-origin:0 50%;">27/05/2025</div>
<div style="left:456.64px;top:224.83px;height:12px;line-height:12px;font-size:8.4px;color:#383838;transform:scaleX(0.895);transform-origin:0 50%;">0525</div>
<div style="left:491.30px;top:224.83px;height:12px;line-height:12px;font-size:8.4px;color:#383838;transform:scaleX(0.821);transform-origin:0 50%;">SVVOP5A10002</div>
<div style="left:567.76px;top:224.83px;height:12px;line-height:12px;font-size:8.4px;color:#383838;transform:scaleX(0.932);transform-origin:0 50%;">1.00</div>
<div style="left:598.16px;top:224.83px;height:12px;line-height:12px;font-size:8.4px;color:#383838;transform:scaleX(0.924);transform-origin:0 50%;">103,000.00</div>
<div style="left:704.76px;top:224.83px;height:12px;line-height:12px;font-size:8.4px;color:#383838;transform:scaleX(0.932);transform-origin:0 50%;">0.00</div>
<div style="left:739.40px;top:224.83px;height:12px;line-height:12px;font-size:8.4px;color:#383838;transform:scaleX(0.919);transform-origin:0 50%;">0.0000</div>
<div style="left:786.82px;top:224.83px;height:12px;line-height:12px;font-size:8.4px;color:#383838;transform:scaleX(0.895);transform-origin:0 50%;">1</div>
<div style="left:794.00px;top:224.83px;height:12px;line-height:12px;font-size:8.4px;color:#383838;transform:scaleX(0.895);transform-origin:0 50%;">000</div>
<div style="left:840.30px;top:226.83px;width:9px;height:9px;border:1px solid #4a75a0;border-radius:1px;background:linear-gradient(135deg,#f4f4f4,#dcdcdc)"></div>
<div style="left:872.35px;top:224.83px;height:12px;line-height:12px;font-size:8.4px;color:#383838;transform:scaleX(0.762);transform-origin:0 50%;">CERRADA</div>
<div style="left:926.50px;top:226.83px;width:9px;height:9px;border:1px solid #4a75a0;border-radius:1px;background:linear-gradient(135deg,#f4f4f4,#dcdcdc)"></div>
<div style="left:1140.46px;top:224.83px;height:12px;line-height:12px;font-size:8.4px;color:#383838;transform:scaleX(0.895);transform-origin:0 50%;">000000</div>
<div style="left:1180.00px;top:224.83px;height:12px;line-height:12px;font-size:8.4px;color:#383838;transform:scaleX(0.792);transform-origin:0 50%;">DIRECTA</div>
<div style="left:1302.09px;top:224.83px;height:12px;line-height:12px;font-size:8.4px;color:#383838;transform:scaleX(0.792);transform-origin:0 50%;">COPSOPRE206</div>
<div style="left:299.20px;top:241.62px;width:9px;height:9px;border:1px solid #4a75a0;border-radius:1px;background:linear-gradient(135deg,#f4f4f4,#dcdcdc)"></div>
<div style="left:313.00px;top:239.62px;height:12px;line-height:12px;font-size:8.4px;color:#383838;transform:scaleX(0.971);transform-origin:0 50%;">01/2025</div>
<div style="left:361.14px;top:239.62px;height:12px;line-height:12px;font-size:8.4px;color:#383838;transform:scaleX(0.895);transform-origin:0 50%;">2566</div>
<div style="left:397.00px;top:239.62px;height:12px;line-height:12px;font-size:8.4px;color:#383838;transform:scaleX(1.005);transform-origin:0 50%;">28/05/2025</div>
<div style="left:456.64px;top:239.62px;height:12px;line-height:12px;font-size:8.4px;color:#383838;transform:scaleX(0.895);transform-origin:0 50%;">1002</div>
<div style="left:491.88px;top:239.62px;height:12px;line-height:12px;font-size:8.4px;color:#383838;transform:scaleX(0.834);transform-origin:0 50%;">IPOPO5A10001</div>
<div style="left:567.76px;top:239.62px;height:12px;line-height:12px;font-size:8.4px;color:#383838;transform:scaleX(0.932);transform-origin:0 50%;">1.00</div>
<div style="left:602.34px;top:239.62px;height:12px;line-height:12px;font-size:8.4px;color:#383838;transform:scaleX(0.927);transform-origin:0 50%;">89,895.52</div>
<div style="left:704.76px;top:239.62px;height:12px;line-height:12px;font-size:8.4px;color:#383838;transform:scaleX(0.932);transform-origin:0 50%;">0.00</div>
<div style="left:739.40px;top:239.62px;height:12px;line-height:12px;font-size:8.4px;color:#383838;transform:scaleX(0.919);transform-origin:0 50%;">0.0000</div>
<div style="left:786.82px;top:239.62px;height:12px;line-height:12px;font-size:8.4px;color:#383838;transform:scaleX(0.895);transform-origin:0 50%;">1</div>
<div style="left:794.00px;top:239.62px;height:12px;line-height:12px;font-size:8.4px;color:#383838;transform:scaleX(0.895);transform-origin:0 50%;">000</div>
<div style="left:840.30px;top:241.62px;width:9px;height:9px;border:1px solid #4a75a0;border-radius:1px;background:linear-gradient(135deg,#f4f4f4,#dcdcdc)"></div>
<div style="left:872.35px;top:239.62px;height:12px;line-height:12px;font-size:8.4px;color:#383838;transform:scaleX(0.762);transform-origin:0 50%;">CERRADA</div>
<div style="left:926.50px;top:241.62px;width:9px;height:9px;border:1px solid #4a75a0;border-radius:1px;background:linear-gradient(135deg,#f4f4f4,#dcdcdc)"></div>
<div style="left:1140.46px;top:239.62px;height:12px;line-height:12px;font-size:8.4px;color:#383838;transform:scaleX(0.895);transform-origin:0 50%;">000000</div>
<div style="left:1180.00px;top:239.62px;height:12px;line-height:12px;font-size:8.4px;color:#383838;transform:scaleX(0.792);transform-origin:0 50%;">DIRECTA</div>
<div style="left:1307.25px;top:239.62px;height:12px;line-height:12px;font-size:8.4px;color:#383838;transform:scaleX(0.801);transform-origin:0 50%;">PSPOPT008</div>
<div style="left:299.20px;top:256.40px;width:9px;height:9px;border:1px solid #4a75a0;border-radius:1px;background:linear-gradient(135deg,#f4f4f4,#dcdcdc)"></div>
<div style="left:313.00px;top:254.40px;height:12px;line-height:12px;font-size:8.4px;color:#383838;transform:scaleX(0.971);transform-origin:0 50%;">01/2025</div>
<div style="left:361.14px;top:254.40px;height:12px;line-height:12px;font-size:8.4px;color:#383838;transform:scaleX(0.895);transform-origin:0 50%;">2567</div>
<div style="left:397.00px;top:254.40px;height:12px;line-height:12px;font-size:8.4px;color:#383838;transform:scaleX(1.005);transform-origin:0 50%;">29/05/2025</div>
<div style="left:456.64px;top:254.40px;height:12px;line-height:12px;font-size:8.4px;color:#383838;transform:scaleX(0.895);transform-origin:0 50%;">0656</div>
<div style="left:492.06px;top:254.40px;height:12px;line-height:12px;font-size:8.4px;color:#383838;transform:scaleX(0.835);transform-origin:0 50%;">IPOPN5A10002</div>
<div style="left:563.58px;top:254.40px;height:12px;line-height:12px;font-size:8.4px;color:#383838;transform:scaleX(0.924);transform-origin:0 50%;">10.00</div>
<div style="left:598.16px;top:254.40px;height:12px;line-height:12px;font-size:8.4px;color:#383838;transform:scaleX(0.924);transform-origin:0 50%;">135,172.70</div>
<div style="left:704.76px;top:254.40px;height:12px;line-height:12px;font-size:8.4px;color:#383838;transform:scaleX(0.932);transform-origin:0 50%;">0.00</div>
<div style="left:739.40px;top:254.40px;height:12px;line-height:12px;font-size:8.4px;color:#383838;transform:scaleX(0.919);transform-origin:0 50%;">0.0000</div>
<div style="left:786.82px;top:254.40px;height:12px;line-height:12px;font-size:8.4px;color:#383838;transform:scaleX(0.895);transform-origin:0 50%;">1</div>
<div style="left:794.00px;top:254.40px;height:12px;line-height:12px;font-size:8.4px;color:#383838;transform:scaleX(0.895);transform-origin:0 50%;">003</div>
<div style="left:840.30px;top:256.40px;width:9px;height:9px;border:1px solid #4a75a0;border-radius:1px;background:linear-gradient(135deg,#f4f4f4,#dcdcdc)"></div>
<div style="left:872.35px;top:254.40px;height:12px;line-height:12px;font-size:8.4px;color:#383838;transform:scaleX(0.762);transform-origin:0 50%;">CERRADA</div>
<div style="left:926.50px;top:256.40px;width:9px;height:9px;border:1px solid #4a75a0;border-radius:1px;background:linear-gradient(135deg,#f4f4f4,#dcdcdc)"></div>
<div style="left:1140.46px;top:254.40px;height:12px;line-height:12px;font-size:8.4px;color:#383838;transform:scaleX(0.895);transform-origin:0 50%;">000000</div>
<div style="left:1180.00px;top:254.40px;height:12px;line-height:12px;font-size:8.4px;color:#383838;transform:scaleX(0.792);transform-origin:0 50%;">DIRECTA</div>
<div style="left:1303.07px;top:254.40px;height:12px;line-height:12px;font-size:8.4px;color:#383838;transform:scaleX(0.816);transform-origin:0 50%;">PSPP14FO032</div>
<div style="left:299.20px;top:271.19px;width:9px;height:9px;border:1px solid #4a75a0;border-radius:1px;background:linear-gradient(135deg,#f4f4f4,#dcdcdc)"></div>
<div style="left:313.00px;top:269.19px;height:12px;line-height:12px;font-size:8.4px;color:#383838;transform:scaleX(0.971);transform-origin:0 50%;">01/2025</div>
<div style="left:361.14px;top:269.19px;height:12px;line-height:12px;font-size:8.4px;color:#383838;transform:scaleX(0.895);transform-origin:0 50%;">2568</div>
<div style="left:397.00px;top:269.19px;height:12px;line-height:12px;font-size:8.4px;color:#383838;transform:scaleX(1.005);transform-origin:0 50%;">28/05/2025</div>
<div style="left:456.64px;top:269.19px;height:12px;line-height:12px;font-size:8.4px;color:#383838;transform:scaleX(0.895);transform-origin:0 50%;">0300</div>
<div style="left:490.99px;top:269.19px;height:12px;line-height:12px;font-size:8.4px;color:#383838;transform:scaleX(0.831);transform-origin:0 50%;">RE2AM5A10001</div>
<div style="left:563.58px;top:269.19px;height:12px;line-height:12px;font-size:8.4px;color:#383838;transform:scaleX(0.924);transform-origin:0 50%;">20.00</div>
<div style="left:617.58px;top:269.19px;height:12px;line-height:12px;font-size:8.4px;color:#383838;transform:scaleX(0.924);transform-origin:0 50%;">64.60</div>
<div style="left:704.76px;top:269.19px;height:12px;line-height:12px;font-size:8.4px;color:#383838;transform:scaleX(0.932);transform-origin:0 50%;">0.00</div>
<div style="left:739.40px;top:269.19px;height:12px;line-height:12px;font-size:8.4px;color:#383838;transform:scaleX(0.919);transform-origin:0 50%;">1.0000</div>
<div style="left:786.82px;top:269.19px;height:12px;line-height:12px;font-size:8.4px;color:#383838;transform:scaleX(0.895);transform-origin:0 50%;">1</div>
<div style="left:794.00px;top:269.19px;height:12px;line-height:12px;font-size:8.4px;color:#383838;transform:scaleX(0.895);transform-origin:0 50%;">002</div>
<div style="left:840.30px;top:271.19px;width:9px;height:9px;border:1px solid #4a75a0;border-radius:1px;background:linear-gradient(135deg,#f4f4f4,#dcdcdc)"></div>
<div style="left:872.35px;top:269.19px;height:12px;line-height:12px;font-size:8.4px;color:#383838;transform:scaleX(0.762);transform-origin:0 50%;">CERRADA</div>
<div style="left:926.50px;top:271.19px;width:9px;height:9px;border:1px solid #4a75a0;border-radius:1px;background:linear-gradient(135deg,#f4f4f4,#dcdcdc)"></div>
<div style="left:1140.46px;top:269.19px;height:12px;line-height:12px;font-size:8.4px;color:#383838;transform:scaleX(0.895);transform-origin:0 50%;">000000</div>
<div style="left:1180.00px;top:269.19px;height:12px;line-height:12px;font-size:8.4px;color:#383838;transform:scaleX(0.792);transform-origin:0 50%;">DIRECTA</div>
<div style="left:1307.25px;top:269.19px;height:12px;line-height:12px;font-size:8.4px;color:#383838;transform:scaleX(0.801);transform-origin:0 50%;">PRPEAK001</div>
<div style="left:1386.05px;top:269.19px;height:12px;line-height:12px;font-size:8.4px;color:#383838;transform:scaleX(0.895);transform-origin:0 50%;">01582</div>
<div style="left:1434.00px;top:269.19px;height:12px;line-height:12px;font-size:8.4px;color:#383838;transform:scaleX(1.005);transform-origin:0 50%;">06/06/2025</div>
<div style="left:299.20px;top:285.99px;width:9px;height:9px;border:1px solid #4a75a0;border-radius:1px;background:linear-gradient(135deg,#f4f4f4,#dcdcdc)"></div>
<div style="left:313.00px;top:283.99px;height:12px;line-height:12px;font-size:8.4px;color:#383838;transform:scaleX(0.971);transform-origin:0 50%;">01/2025</div>
<div style="left:361.14px;top:283.99px;height:12px;line-height:12px;font-size:8.4px;color:#383838;transform:scaleX(0.895);transform-origin:0 50%;">2569</div>
<div style="left:397.00px;top:283.99px;height:12px;line-height:12px;font-size:8.4px;color:#383838;transform:scaleX(1.005);transform-origin:0 50%;">28/05/2025</div>
<div style="left:456.64px;top:283.99px;height:12px;line-height:12px;font-size:8.4px;color:#383838;transform:scaleX(0.895);transform-origin:0 50%;">0300</div>
<div style="left:490.99px;top:283.99px;height:12px;line-height:12px;font-size:8.4px;color:#383838;transform:scaleX(0.831);transform-origin:0 50%;">RE2AM5A10001</div>
<div style="left:563.58px;top:283.99px;height:12px;line-height:12px;font-size:8.4px;color:#383838;transform:scaleX(0.924);transform-origin:0 50%;">40.00</div>
<div style="left:617.58px;top:283.99px;height:12px;line-height:12px;font-size:8.4px;color:#383838;transform:scaleX(0.924);transform-origin:0 50%;">88.58</div>
<div style="left:704.76px;top:283.99px;height:12px;line-height:12px;font-size:8.4px;color:#383838;transform:scaleX(0.932);transform-origin:0 50%;">0.00</div>
<div style="left:739.40px;top:283.99px;height:12px;line-height:12px;font-size:8.4px;color:#383838;transform:scaleX(0.919);transform-origin:0 50%;">1.0000</div>
<div style="left:786.82px;top:283.99px;height:12px;line-height:12px;font-size:8.4px;color:#383838;transform:scaleX(0.895);transform-origin:0 50%;">1</div>
<div style="left:794.00px;top:283.99px;height:12px;line-height:12px;font-size:8.4px;color:#383838;transform:scaleX(0.895);transform-origin:0 50%;">001</div>
<div style="left:840.30px;top:285.99px;width:9px;height:9px;border:1px solid #4a75a0;border-radius:1px;background:linear-gradient(135deg,#f4f4f4,#dcdcdc)"></div>
<div style="left:872.35px;top:283.99px;height:12px;line-height:12px;font-size:8.4px;color:#383838;transform:scaleX(0.762);transform-origin:0 50%;">CERRADA</div>
<div style="left:926.50px;top:285.99px;width:9px;height:9px;border:1px solid #4a75a0;border-radius:1px;background:linear-gradient(135deg,#f4f4f4,#dcdcdc)"></div>
<div style="left:1140.46px;top:283.99px;height:12px;line-height:12px;font-size:8.4px;color:#383838;transform:scaleX(0.895);transform-origin:0 50%;">000000</div>
<div style="left:1180.00px;top:283.99px;height:12px;line-height:12px;font-size:8.4px;color:#383838;transform:scaleX(0.792);transform-origin:0 50%;">DIRECTA</div>
<div style="left:1307.25px;top:283.99px;height:12px;line-height:12px;font-size:8.4px;color:#383838;transform:scaleX(0.801);transform-origin:0 50%;">PRPEAK001</div>
<div style="left:299.20px;top:300.77px;width:9px;height:9px;border:1px solid #4a75a0;border-radius:1px;background:linear-gradient(135deg,#f4f4f4,#dcdcdc)"></div>
<div style="left:313.00px;top:298.77px;height:12px;line-height:12px;font-size:8.4px;color:#383838;transform:scaleX(0.971);transform-origin:0 50%;">01/2025</div>
<div style="left:361.14px;top:298.77px;height:12px;line-height:12px;font-size:8.4px;color:#383838;transform:scaleX(0.895);transform-origin:0 50%;">2570</div>
<div style="left:397.00px;top:298.77px;height:12px;line-height:12px;font-size:8.4px;color:#383838;transform:scaleX(1.005);transform-origin:0 50%;">28/05/2025</div>
<div style="left:456.64px;top:298.77px;height:12px;line-height:12px;font-size:8.4px;color:#383838;transform:scaleX(0.895);transform-origin:0 50%;">0299</div>
<div style="left:491.17px;top:298.77px;height:12px;line-height:12px;font-size:8.4px;color:#383838;transform:scaleX(0.832);transform-origin:0 50%;">RE2PO5A10001</div>
<div style="left:563.58px;top:298.77px;height:12px;line-height:12px;font-size:8.4px;color:#383838;transform:scaleX(0.924);transform-origin:0 50%;">40.00</div>
<div style="left:613.40px;top:298.77px;height:12px;line-height:12px;font-size:8.4px;color:#383838;transform:scaleX(0.919);transform-origin:0 50%;">235.61</div>
<div style="left:704.76px;top:298.77px;height:12px;line-height:12px;font-size:8.4px;color:#383838;transform:scaleX(0.932);transform-origin:0 50%;">0.00</div>
<div style="left:739.40px;top:298.77px;height:12px;line-height:12px;font-size:8.4px;color:#383838;transform:scaleX(0.919);transform-origin:0 50%;">1.0000</div>
<div style="left:786.82px;top:298.77px;height:12px;line-height:12px;font-size:8.4px;color:#383838;transform:scaleX(0.895);transform-origin:0 50%;">1</div>
<div style="left:794.00px;top:298.77px;height:12px;line-height:12px;font-size:8.4px;color:#383838;transform:scaleX(0.895);transform-origin:0 50%;">001</div>
<div style="left:840.30px;top:300.77px;width:9px;height:9px;border:1px solid #4a75a0;border-radius:1px;background:linear-gradient(135deg,#f4f4f4,#dcdcdc)"></div>
<div style="left:872.35px;top:298.77px;height:12px;line-height:12px;font-size:8.4px;color:#383838;transform:scaleX(0.762);transform-origin:0 50%;">CERRADA</div>
<div style="left:926.50px;top:300.77px;width:9px;height:9px;border:1px solid #4a75a0;border-radius:1px;background:linear-gradient(135deg,#f4f4f4,#dcdcdc)"></div>
<div style="left:1140.46px;top:298.77px;height:12px;line-height:12px;font-size:8.4px;color:#383838;transform:scaleX(0.895);transform-origin:0 50%;">000000</div>
<div style="left:1180.00px;top:298.77px;height:12px;line-height:12px;font-size:8.4px;color:#383838;transform:scaleX(0.792);transform-origin:0 50%;">DIRECTA</div>
<div style="left:1305.16px;top:298.77px;height:12px;line-height:12px;font-size:8.4px;color:#383838;transform:scaleX(0.819);transform-origin:0 50%;">PRPEPA0010</div>
<div style="left:299.20px;top:315.56px;width:9px;height:9px;border:1px solid #4a75a0;border-radius:1px;background:linear-gradient(135deg,#f4f4f4,#dcdcdc)"></div>
<div style="left:313.00px;top:313.56px;height:12px;line-height:12px;font-size:8.4px;color:#383838;transform:scaleX(0.971);transform-origin:0 50%;">01/2025</div>
<div style="left:361.14px;top:313.56px;height:12px;line-height:12px;font-size:8.4px;color:#383838;transform:scaleX(0.895);transform-origin:0 50%;">2571</div>
<div style="left:397.00px;top:313.56px;height:12px;line-height:12px;font-size:8.4px;color:#383838;transform:scaleX(1.005);transform-origin:0 50%;">28/05/2025</div>
<div style="left:456.64px;top:313.56px;height:12px;line-height:12px;font-size:8.4px;color:#383838;transform:scaleX(0.895);transform-origin:0 50%;">0299</div>
<div style="left:491.17px;top:313.56px;height:12px;line-height:12px;font-size:8.4px;color:#383838;transform:scaleX(0.832);transform-origin:0 50%;">RE2PO5A10001</div>
<div style="left:563.58px;top:313.56px;height:12px;line-height:12px;font-size:8.4px;color:#383838;transform:scaleX(0.924);transform-origin:0 50%;">40.00</div>
<div style="left:617.58px;top:313.56px;height:12px;line-height:12px;font-size:8.4px;color:#383838;transform:scaleX(0.924);transform-origin:0 50%;">54.26</div>
<div style="left:704.76px;top:313.56px;height:12px;line-height:12px;font-size:8.4px;color:#383838;transform:scaleX(0.932);transform-origin:0 50%;">0.00</div>
<div style="left:739.40px;top:313.56px;height:12px;line-height:12px;font-size:8.4px;color:#383838;transform:scaleX(0.919);transform-origin:0 50%;">1.0000</div>
<div style="left:786.82px;top:313.56px;height:12px;line-height:12px;font-size:8.4px;color:#383838;transform:scaleX(0.895);transform-origin:0 50%;">1</div>
<div style="left:794.00px;top:313.56px;height:12px;line-height:12px;font-size:8.4px;color:#383838;transform:scaleX(0.895);transform-origin:0 50%;">001</div>
<div style="left:840.30px;top:315.56px;width:9px;height:9px;border:1px solid #4a75a0;border-radius:1px;background:linear-gradient(135deg,#f4f4f4,#dcdcdc)"></div>
<div style="left:872.35px;top:313.56px;height:12px;line-height:12px;font-size:8.4px;color:#383838;transform:scaleX(0.762);transform-origin:0 50%;">CERRADA</div>
<div style="left:926.50px;top:315.56px;width:9px;height:9px;border:1px solid #4a75a0;border-radius:1px;background:linear-gradient(135deg,#f4f4f4,#dcdcdc)"></div>
<div style="left:1140.46px;top:313.56px;height:12px;line-height:12px;font-size:8.4px;color:#383838;transform:scaleX(0.895);transform-origin:0 50%;">000000</div>
<div style="left:1180.00px;top:313.56px;height:12px;line-height:12px;font-size:8.4px;color:#383838;transform:scaleX(0.792);transform-origin:0 50%;">DIRECTA</div>
<div style="left:1305.16px;top:313.56px;height:12px;line-height:12px;font-size:8.4px;color:#383838;transform:scaleX(0.819);transform-origin:0 50%;">PRPEPA0010</div>
<div style="left:1386.05px;top:313.56px;height:12px;line-height:12px;font-size:8.4px;color:#383838;transform:scaleX(0.895);transform-origin:0 50%;">01599</div>
<div style="left:1434.00px;top:313.56px;height:12px;line-height:12px;font-size:8.4px;color:#383838;transform:scaleX(1.005);transform-origin:0 50%;">06/06/2025</div>
<div style="left:299.20px;top:330.36px;width:9px;height:9px;border:1px solid #4a75a0;border-radius:1px;background:linear-gradient(135deg,#f4f4f4,#dcdcdc)"></div>
<div style="left:313.00px;top:328.36px;height:12px;line-height:12px;font-size:8.4px;color:#383838;transform:scaleX(0.971);transform-origin:0 50%;">01/2025</div>
<div style="left:361.14px;top:328.36px;height:12px;line-height:12px;font-size:8.4px;color:#383838;transform:scaleX(0.895);transform-origin:0 50%;">2577</div>
<div style="left:397.00px;top:328.36px;height:12px;line-height:12px;font-size:8.4px;color:#383838;transform:scaleX(1.005);transform-origin:0 50%;">29/05/2025</div>
<div style="left:456.64px;top:328.36px;height:12px;line-height:12px;font-size:8.4px;color:#383838;transform:scaleX(0.895);transform-origin:0 50%;">0138</div>
<div style="left:491.52px;top:328.36px;height:12px;line-height:12px;font-size:8.4px;color:#383838;transform:scaleX(0.833);transform-origin:0 50%;">RE3AK5A10001</div>
<div style="left:559.40px;top:328.36px;height:12px;line-height:12px;font-size:8.4px;color:#383838;transform:scaleX(0.919);transform-origin:0 50%;">100.00</div>
<div style="left:613.40px;top:328.36px;height:12px;line-height:12px;font-size:8.4px;color:#383838;transform:scaleX(0.919);transform-origin:0 50%;">465.00</div>
<div style="left:704.76px;top:328.36px;height:12px;line-height:12px;font-size:8.4px;color:#383838;transform:scaleX(0.932);transform-origin:0 50%;">0.00</div>
<div style="left:739.40px;top:328.36px;height:12px;line-height:12px;font-size:8.4px;color:#383838;transform:scaleX(0.919);transform-origin:0 50%;">1.0000</div>
<div style="left:786.82px;top:328.36px;height:12px;line-height:12px;font-size:8.4px;color:#383838;transform:scaleX(0.895);transform-origin:0 50%;">1</div>
<div style="left:794.00px;top:328.36px;height:12px;line-height:12px;font-size:8.4px;color:#383838;transform:scaleX(0.895);transform-origin:0 50%;">000</div>
<div style="left:840.30px;top:330.36px;width:9px;height:9px;border:1px solid #4a75a0;border-radius:1px;background:linear-gradient(135deg,#f4f4f4,#dcdcdc)"></div>
<div style="left:872.35px;top:328.36px;height:12px;line-height:12px;font-size:8.4px;color:#383838;transform:scaleX(0.762);transform-origin:0 50%;">CERRADA</div>
<div style="left:926.50px;top:330.36px;width:9px;height:9px;border:1px solid #4a75a0;border-radius:1px;background:linear-gradient(135deg,#f4f4f4,#dcdcdc)"></div>
<div style="left:1140.46px;top:328.36px;height:12px;line-height:12px;font-size:8.4px;color:#383838;transform:scaleX(0.895);transform-origin:0 50%;">000000</div>
<div style="left:1180.00px;top:328.36px;height:12px;line-height:12px;font-size:8.4px;color:#383838;transform:scaleX(0.792);transform-origin:0 50%;">DIRECTA</div>
<div style="left:1307.60px;top:328.36px;height:12px;line-height:12px;font-size:8.4px;color:#383838;transform:scaleX(0.834);transform-origin:0 50%;">ATAPAK002</div>
<div style="left:1386.05px;top:328.36px;height:12px;line-height:12px;font-size:8.4px;color:#383838;transform:scaleX(0.895);transform-origin:0 50%;">01599</div>
<div style="left:1434.00px;top:328.36px;height:12px;line-height:12px;font-size:8.4px;color:#383838;transform:scaleX(1.005);transform-origin:0 50%;">06/06/2025</div>
<div style="left:299.20px;top:345.14px;width:9px;height:9px;border:1px solid #4a75a0;border-radius:1px;background:linear-gradient(135deg,#f4f4f4,#dcdcdc)"></div>
<div style="left:313.00px;top:343.14px;height:12px;line-height:12px;font-size:8.4px;color:#383838;transform:scaleX(0.971);transform-origin:0 50%;">01/2025</div>
<div style="left:361.14px;top:343.14px;height:12px;line-height:12px;font-size:8.4px;color:#383838;transform:scaleX(0.895);transform-origin:0 50%;">2578</div>
<div style="left:397.00px;top:343.14px;height:12px;line-height:12px;font-size:8.4px;color:#383838;transform:scaleX(1.005);transform-origin:0 50%;">29/05/2025</div>
<div style="left:456.64px;top:343.14px;height:12px;line-height:12px;font-size:8.4px;color:#383838;transform:scaleX(0.895);transform-origin:0 50%;">0136</div>
<div style="left:491.52px;top:343.14px;height:12px;line-height:12px;font-size:8.4px;color:#383838;transform:scaleX(0.841);transform-origin:0 50%;">RE3PA5A10001</div>
<div style="left:559.40px;top:343.14px;height:12px;line-height:12px;font-size:8.4px;color:#383838;transform:scaleX(0.919);transform-origin:0 50%;">600.00</div>
<div style="left:606.52px;top:343.14px;height:12px;line-height:12px;font-size:8.4px;color:#383838;transform:scaleX(0.932);transform-origin:0 50%;">4,650.00</div>
<div style="left:704.76px;top:343.14px;height:12px;line-height:12px;font-size:8.4px;color:#383838;transform:scaleX(0.932);transform-origin:0 50%;">0.00</div>
<div style="left:739.40px;top:343.14px;height:12px;line-height:12px;font-size:8.4px;color:#383838;transform:scaleX(0.919);transform-origin:0 50%;">1.0000</div>
<div style="left:786.82px;top:343.14px;height:12px;line-height:12px;font-size:8.4px;color:#383838;transform:scaleX(0.895);transform-origin:0 50%;">1</div>
<div style="left:794.00px;top:343.14px;height:12px;line-height:12px;font-size:8.4px;color:#383838;transform:scaleX(0.895);transform-origin:0 50%;">000</div>
<div style="left:840.30px;top:345.14px;width:9px;height:9px;border:1px solid #4a75a0;border-radius:1px;background:linear-gradient(135deg,#f4f4f4,#dcdcdc)"></div>
<div style="left:872.35px;top:343.14px;height:12px;line-height:12px;font-size:8.4px;color:#383838;transform:scaleX(0.762);transform-origin:0 50%;">CERRADA</div>
<div style="left:926.50px;top:345.14px;width:9px;height:9px;border:1px solid #4a75a0;border-radius:1px;background:linear-gradient(135deg,#f4f4f4,#dcdcdc)"></div>
<div style="left:1140.46px;top:343.14px;height:12px;line-height:12px;font-size:8.4px;color:#383838;transform:scaleX(0.895);transform-origin:0 50%;">000000</div>
<div style="left:1180.00px;top:343.14px;height:12px;line-height:12px;font-size:8.4px;color:#383838;transform:scaleX(0.792);transform-origin:0 50%;">DIRECTA</div>
<div style="left:1307.25px;top:343.14px;height:12px;line-height:12px;font-size:8.4px;color:#383838;transform:scaleX(0.801);transform-origin:0 50%;">PSPOPT003</div>
<div style="left:1386.05px;top:343.14px;height:12px;line-height:12px;font-size:8.4px;color:#383838;transform:scaleX(0.895);transform-origin:0 50%;">01599</div>
<div style="left:1434.00px;top:343.14px;height:12px;line-height:12px;font-size:8.4px;color:#383838;transform:scaleX(1.005);transform-origin:0 50%;">06/06/2025</div>
<div style="left:299.20px;top:359.93px;width:9px;height:9px;border:1px solid #4a75a0;border-radius:1px;background:linear-gradient(135deg,#f4f4f4,#dcdcdc)"></div>
<div style="left:313.00px;top:357.93px;height:12px;line-height:12px;font-size:8.4px;color:#383838;transform:scaleX(0.971);transform-origin:0 50%;">01/2025</div>
<div style="left:361.14px;top:357.93px;height:12px;line-height:12px;font-size:8.4px;color:#383838;transform:scaleX(0.895);transform-origin:0 50%;">2579</div>
<div style="left:397.00px;top:357.93px;height:12px;line-height:12px;font-size:8.4px;color:#383838;transform:scaleX(1.005);transform-origin:0 50%;">30/05/2025</div>
<div style="left:456.64px;top:357.93px;height:12px;line-height:12px;font-size:8.4px;color:#383838;transform:scaleX(0.895);transform-origin:0 50%;">0300</div>
<div style="left:490.99px;top:357.93px;height:12px;line-height:12px;font-size:8.4px;color:#383838;transform:scaleX(0.831);transform-origin:0 50%;">RE2AM5A10001</div>
<div style="left:552.52px;top:357.93px;height:12px;line-height:12px;font-size:8.4px;color:#383838;transform:scaleX(0.932);transform-origin:0 50%;">3,300.00</div>
<div style="left:602.34px;top:357.93px;height:12px;line-height:12px;font-size:8.4px;color:#383838;transform:scaleX(0.927);transform-origin:0 50%;">15,510.00</div>
<div style="left:704.76px;top:357.93px;height:12px;line-height:12px;font-size:8.4px;color:#383838;transform:scaleX(0.932);transform-origin:0 50%;">0.00</div>
<div style="left:739.40px;top:357.93px;height:12px;line-height:12px;font-size:8.4px;color:#383838;transform:scaleX(0.919);transform-origin:0 50%;">1.0000</div>
<div style="left:786.82px;top:357.93px;height:12px;line-height:12px;font-size:8.4px;color:#383838;transform:scaleX(0.895);transform-origin:0 50%;">1</div>
<div style="left:794.00px;top:357.93px;height:12px;line-height:12px;font-size:8.4px;color:#383838;transform:scaleX(0.895);transform-origin:0 50%;">000</div>
<div style="left:840.30px;top:359.93px;width:9px;height:9px;border:1px solid #4a75a0;border-radius:1px;background:linear-gradient(135deg,#f4f4f4,#dcdcdc)"></div>
<div style="left:872.35px;top:357.93px;height:12px;line-height:12px;font-size:8.4px;color:#383838;transform:scaleX(0.762);transform-origin:0 50%;">CERRADA</div>
<div style="left:926.50px;top:359.93px;width:9px;height:9px;border:1px solid #4a75a0;border-radius:1px;background:linear-gradient(135deg,#f4f4f4,#dcdcdc)"></div>
<div style="left:1140.46px;top:357.93px;height:12px;line-height:12px;font-size:8.4px;color:#383838;transform:scaleX(0.895);transform-origin:0 50%;">000000</div>
<div style="left:1180.00px;top:357.93px;height:12px;line-height:12px;font-size:8.4px;color:#383838;transform:scaleX(0.792);transform-origin:0 50%;">DIRECTA</div>
<div style="left:1307.25px;top:357.93px;height:12px;line-height:12px;font-size:8.4px;color:#383838;transform:scaleX(0.801);transform-origin:0 50%;">PRPEAK001</div>
<div style="left:299.20px;top:374.72px;width:9px;height:9px;border:1px solid #4a75a0;border-radius:1px;background:linear-gradient(135deg,#f4f4f4,#dcdcdc)"></div>
<div style="left:313.00px;top:372.72px;height:12px;line-height:12px;font-size:8.4px;color:#383838;transform:scaleX(0.971);transform-origin:0 50%;">01/2025</div>
<div style="left:361.14px;top:372.72px;height:12px;line-height:12px;font-size:8.4px;color:#383838;transform:scaleX(0.895);transform-origin:0 50%;">2580</div>
<div style="left:397.00px;top:372.72px;height:12px;line-height:12px;font-size:8.4px;color:#383838;transform:scaleX(1.005);transform-origin:0 50%;">30/05/2025</div>
<div style="left:456.64px;top:372.72px;height:12px;line-height:12px;font-size:8.4px;color:#383838;transform:scaleX(0.895);transform-origin:0 50%;">0301</div>
<div style="left:491.52px;top:372.72px;height:12px;line-height:12px;font-size:8.4px;color:#383838;transform:scaleX(0.841);transform-origin:0 50%;">RE2PA5A10002</div>
<div style="left:559.40px;top:372.72px;height:12px;line-height:12px;font-size:8.4px;color:#383838;transform:scaleX(0.919);transform-origin:0 50%;">560.00</div>
<div style="left:606.52px;top:372.72px;height:12px;line-height:12px;font-size:8.4px;color:#383838;transform:scaleX(0.932);transform-origin:0 50%;">2,593.26</div>
<div style="left:704.76px;top:372.72px;height:12px;line-height:12px;font-size:8.4px;color:#383838;transform:scaleX(0.932);transform-origin:0 50%;">0.00</div>
<div style="left:739.40px;top:372.72px;height:12px;line-height:12px;font-size:8.4px;color:#383838;transform:scaleX(0.919);transform-origin:0 50%;">1.0000</div>
<div style="left:786.82px;top:372.72px;height:12px;line-height:12px;font-size:8.4px;color:#383838;transform:scaleX(0.895);transform-origin:0 50%;">1</div>
<div style="left:794.00px;top:372.72px;height:12px;line-height:12px;font-size:8.4px;color:#383838;transform:scaleX(0.895);transform-origin:0 50%;">000</div>
<div style="left:840.30px;top:374.72px;width:9px;height:9px;border:1px solid #4a75a0;border-radius:1px;background:linear-gradient(135deg,#f4f4f4,#dcdcdc)"></div>
<div style="left:872.35px;top:372.72px;height:12px;line-height:12px;font-size:8.4px;color:#383838;transform:scaleX(0.762);transform-origin:0 50%;">CERRADA</div>
<div style="left:926.50px;top:374.72px;width:9px;height:9px;border:1px solid #4a75a0;border-radius:1px;background:linear-gradient(135deg,#f4f4f4,#dcdcdc)"></div>
<div style="left:1140.46px;top:372.72px;height:12px;line-height:12px;font-size:8.4px;color:#383838;transform:scaleX(0.895);transform-origin:0 50%;">000000</div>
<div style="left:1180.00px;top:372.72px;height:12px;line-height:12px;font-size:8.4px;color:#383838;transform:scaleX(0.792);transform-origin:0 50%;">DIRECTA</div>
<div style="left:1305.16px;top:372.72px;height:12px;line-height:12px;font-size:8.4px;color:#383838;transform:scaleX(0.809);transform-origin:0 50%;">PSPOPT0016</div>
<div style="left:299.20px;top:389.51px;width:9px;height:9px;border:1px solid #4a75a0;border-radius:1px;background:linear-gradient(135deg,#f4f4f4,#dcdcdc)"></div>
<div style="left:313.00px;top:387.51px;height:12px;line-height:12px;font-size:8.4px;color:#383838;transform:scaleX(0.971);transform-origin:0 50%;">01/2025</div>
<div style="left:361.14px;top:387.51px;height:12px;line-height:12px;font-size:8.4px;color:#383838;transform:scaleX(0.895);transform-origin:0 50%;">2583</div>
<div style="left:397.00px;top:387.51px;height:12px;line-height:12px;font-size:8.4px;color:#383838;transform:scaleX(1.005);transform-origin:0 50%;">03/06/2025</div>
<div style="left:456.64px;top:387.51px;height:12px;line-height:12px;font-size:8.4px;color:#383838;transform:scaleX(0.895);transform-origin:0 50%;">0515</div>
<div style="left:491.30px;top:387.51px;height:12px;line-height:12px;font-size:8.4px;color:#383838;transform:scaleX(0.821);transform-origin:0 50%;">SVVOP5A10001</div>
<div style="left:567.76px;top:387.51px;height:12px;line-height:12px;font-size:8.4px;color:#383838;transform:scaleX(0.932);transform-origin:0 50%;">1.00</div>
<div style="left:598.16px;top:387.51px;height:12px;line-height:12px;font-size:8.4px;color:#383838;transform:scaleX(0.924);transform-origin:0 50%;">126,000.00</div>
<div style="left:704.76px;top:387.51px;height:12px;line-height:12px;font-size:8.4px;color:#383838;transform:scaleX(0.932);transform-origin:0 50%;">0.00</div>
<div style="left:739.40px;top:387.51px;height:12px;line-height:12px;font-size:8.4px;color:#383838;transform:scaleX(0.919);transform-origin:0 50%;">0.0000</div>
<div style="left:786.82px;top:387.51px;height:12px;line-height:12px;font-size:8.4px;color:#383838;transform:scaleX(0.895);transform-origin:0 50%;">1</div>
<div style="left:794.00px;top:387.51px;height:12px;line-height:12px;font-size:8.4px;color:#383838;transform:scaleX(0.895);transform-origin:0 50%;">000</div>
<div style="left:840.30px;top:389.51px;width:9px;height:9px;border:1px solid #4a75a0;border-radius:1px;background:linear-gradient(135deg,#f4f4f4,#dcdcdc)"></div>
<div style="left:872.35px;top:387.51px;height:12px;line-height:12px;font-size:8.4px;color:#383838;transform:scaleX(0.762);transform-origin:0 50%;">CERRADA</div>
<div style="left:926.50px;top:389.51px;width:9px;height:9px;border:1px solid #4a75a0;border-radius:1px;background:linear-gradient(135deg,#f4f4f4,#dcdcdc)"></div>
<div style="left:1140.46px;top:387.51px;height:12px;line-height:12px;font-size:8.4px;color:#383838;transform:scaleX(0.895);transform-origin:0 50%;">000000</div>
<div style="left:1180.00px;top:387.51px;height:12px;line-height:12px;font-size:8.4px;color:#383838;transform:scaleX(0.792);transform-origin:0 50%;">DIRECTA</div>
<div style="left:1302.31px;top:387.51px;height:12px;line-height:12px;font-size:8.4px;color:#383838;transform:scaleX(0.803);transform-origin:0 50%;">COPSOPX8227</div>
<div style="left:299.20px;top:404.30px;width:9px;height:9px;border:1px solid #4a75a0;border-radius:1px;background:linear-gradient(135deg,#f4f4f4,#dcdcdc)"></div>
<div style="left:313.00px;top:402.30px;height:12px;line-height:12px;font-size:8.4px;color:#383838;transform:scaleX(0.971);transform-origin:0 50%;">01/2025</div>
<div style="left:361.14px;top:402.30px;height:12px;line-height:12px;font-size:8.4px;color:#383838;transform:scaleX(0.895);transform-origin:0 50%;">2584</div>
<div style="left:397.00px;top:402.30px;height:12px;line-height:12px;font-size:8.4px;color:#383838;transform:scaleX(1.005);transform-origin:0 50%;">03/06/2025</div>
<div style="left:456.64px;top:402.30px;height:12px;line-height:12px;font-size:8.4px;color:#383838;transform:scaleX(0.895);transform-origin:0 50%;">0515</div>
<div style="left:491.30px;top:402.30px;height:12px;line-height:12px;font-size:8.4px;color:#383838;transform:scaleX(0.821);transform-origin:0 50%;">SVVOP5A10001</div>
<div style="left:567.76px;top:402.30px;height:12px;line-height:12px;font-size:8.4px;color:#383838;transform:scaleX(0.932);transform-origin:0 50%;">3.00</div>
<div style="left:598.16px;top:402.30px;height:12px;line-height:12px;font-size:8.4px;color:#383838;transform:scaleX(0.924);transform-origin:0 50%;">217,400.00</div>
<div style="left:704.76px;top:402.30px;height:12px;line-height:12px;font-size:8.4px;color:#383838;transform:scaleX(0.932);transform-origin:0 50%;">0.00</div>
<div style="left:739.40px;top:402.30px;height:12px;line-height:12px;font-size:8.4px;color:#383838;transform:scaleX(0.919);transform-origin:0 50%;">0.0000</div>
<div style="left:786.82px;top:402.30px;height:12px;line-height:12px;font-size:8.4px;color:#383838;transform:scaleX(0.895);transform-origin:0 50%;">1</div>
<div style="left:794.00px;top:402.30px;height:12px;line-height:12px;font-size:8.4px;color:#383838;transform:scaleX(0.895);transform-origin:0 50%;">000</div>
<div style="left:840.30px;top:404.30px;width:9px;height:9px;border:1px solid #4a75a0;border-radius:1px;background:linear-gradient(135deg,#f4f4f4,#dcdcdc)"></div>
<div style="left:872.35px;top:402.30px;height:12px;line-height:12px;font-size:8.4px;color:#383838;transform:scaleX(0.762);transform-origin:0 50%;">CERRADA</div>
<div style="left:926.50px;top:404.30px;width:9px;height:9px;border:1px solid #4a75a0;border-radius:1px;background:linear-gradient(135deg,#f4f4f4,#dcdcdc)"></div>
<div style="left:1140.46px;top:402.30px;height:12px;line-height:12px;font-size:8.4px;color:#383838;transform:scaleX(0.895);transform-origin:0 50%;">000000</div>
<div style="left:1180.00px;top:402.30px;height:12px;line-height:12px;font-size:8.4px;color:#383838;transform:scaleX(0.792);transform-origin:0 50%;">DIRECTA</div>
<div style="left:1302.31px;top:402.30px;height:12px;line-height:12px;font-size:8.4px;color:#383838;transform:scaleX(0.803);transform-origin:0 50%;">COPSOPX8227</div>
<div style="left:299.20px;top:419.09px;width:9px;height:9px;border:1px solid #4a75a0;border-radius:1px;background:linear-gradient(135deg,#f4f4f4,#dcdcdc)"></div>
<div style="left:313.00px;top:417.09px;height:12px;line-height:12px;font-size:8.4px;color:#383838;transform:scaleX(0.971);transform-origin:0 50%;">01/2025</div>
<div style="left:361.14px;top:417.09px;height:12px;line-height:12px;font-size:8.4px;color:#383838;transform:scaleX(0.895);transform-origin:0 50%;">2585</div>
<div style="left:397.00px;top:417.09px;height:12px;line-height:12px;font-size:8.4px;color:#383838;transform:scaleX(1.005);transform-origin:0 50%;">03/06/2025</div>
<div style="left:456.64px;top:417.09px;height:12px;line-height:12px;font-size:8.4px;color:#383838;transform:scaleX(0.895);transform-origin:0 50%;">0515</div>
<div style="left:491.30px;top:417.09px;height:12px;line-height:12px;font-size:8.4px;color:#383838;transform:scaleX(0.821);transform-origin:0 50%;">SVVOP5A10001</div>
<div style="left:567.76px;top:417.09px;height:12px;line-height:12px;font-size:8.4px;color:#383838;transform:scaleX(0.932);transform-origin:0 50%;">1.00</div>
<div style="left:602.34px;top:417.09px;height:12px;line-height:12px;font-size:8.4px;color:#383838;transform:scaleX(0.927);transform-origin:0 50%;">47,500.00</div>
<div style="left:704.76px;top:417.09px;height:12px;line-height:12px;font-size:8.4px;color:#383838;transform:scaleX(0.932);transform-origin:0 50%;">0.00</div>
<div style="left:739.40px;top:417.09px;height:12px;line-height:12px;font-size:8.4px;color:#383838;transform:scaleX(0.919);transform-origin:0 50%;">0.0000</div>
<div style="left:786.82px;top:417.09px;height:12px;line-height:12px;font-size:8.4px;color:#383838;transform:scaleX(0.895);transform-origin:0 50%;">1</div>
<div style="left:794.00px;top:417.09px;height:12px;line-height:12px;font-size:8.4px;color:#383838;transform:scaleX(0.895);transform-origin:0 50%;">000</div>
<div style="left:840.30px;top:419.09px;width:9px;height:9px;border:1px solid #4a75a0;border-radius:1px;background:linear-gradient(135deg,#f4f4f4,#dcdcdc)"></div>
<div style="left:872.35px;top:417.09px;height:12px;line-height:12px;font-size:8.4px;color:#383838;transform:scaleX(0.762);transform-origin:0 50%;">CERRADA</div>
<div style="left:926.50px;top:419.09px;width:9px;height:9px;border:1px solid #4a75a0;border-radius:1px;background:linear-gradient(135deg,#f4f4f4,#dcdcdc)"></div>
<div style="left:1140.46px;top:417.09px;height:12px;line-height:12px;font-size:8.4px;color:#383838;transform:scaleX(0.895);transform-origin:0 50%;">000000</div>
<div style="left:1180.00px;top:417.09px;height:12px;line-height:12px;font-size:8.4px;color:#383838;transform:scaleX(0.792);transform-origin:0 50%;">DIRECTA</div>
<div style="left:1302.31px;top:417.09px;height:12px;line-height:12px;font-size:8.4px;color:#383838;transform:scaleX(0.803);transform-origin:0 50%;">COPSOPX8227</div>
<div style="left:299.20px;top:433.88px;width:9px;height:9px;border:1px solid #4a75a0;border-radius:1px;background:linear-gradient(135deg,#f4f4f4,#dcdcdc)"></div>
<div style="left:313.00px;top:431.88px;height:12px;line-height:12px;font-size:8.4px;color:#383838;transform:scaleX(0.971);transform-origin:0 50%;">01/2025</div>
<div style="left:361.14px;top:431.88px;height:12px;line-height:12px;font-size:8.4px;color:#383838;transform:scaleX(0.895);transform-origin:0 50%;">2586</div>
<div style="left:397.00px;top:431.88px;height:12px;line-height:12px;font-size:8.4px;color:#383838;transform:scaleX(1.005);transform-origin:0 50%;">03/06/2025</div>
<div style="left:456.64px;top:431.88px;height:12px;line-height:12px;font-size:8.4px;color:#383838;transform:scaleX(0.895);transform-origin:0 50%;">0515</div>
<div style="left:491.30px;top:431.88px;height:12px;line-height:12px;font-size:8.4px;color:#383838;transform:scaleX(0.821);transform-origin:0 50%;">SVVOP5A10001</div>
<div style="left:567.76px;top:431.88px;height:12px;line-height:12px;font-size:8.4px;color:#383838;transform:scaleX(0.932);transform-origin:0 50%;">1.00</div>
<div style="left:598.16px;top:431.88px;height:12px;line-height:12px;font-size:8.4px;color:#383838;transform:scaleX(0.924);transform-origin:0 50%;">140,600.00</div>
<div style="left:704.76px;top:431.88px;height:12px;line-height:12px;font-size:8.4px;color:#383838;transform:scaleX(0.932);transform-origin:0 50%;">0.00</div>
<div style="left:739.40px;top:431.88px;height:12px;line-height:12px;font-size:8.4px;color:#383838;transform:scaleX(0.919);transform-origin:0 50%;">0.0000</div>
<div style="left:786.82px;top:431.88px;height:12px;line-height:12px;font-size:8.4px;color:#383838;transform:scaleX(0.895);transform-origin:0 50%;">1</div>
<div style="left:794.00px;top:431.88px;height:12px;line-height:12px;font-size:8.4px;color:#383838;transform:scaleX(0.895);transform-origin:0 50%;">000</div>
<div style="left:840.30px;top:433.88px;width:9px;height:9px;border:1px solid #4a75a0;border-radius:1px;background:linear-gradient(135deg,#f4f4f4,#dcdcdc)"></div>
<div style="left:872.35px;top:431.88px;height:12px;line-height:12px;font-size:8.4px;color:#383838;transform:scaleX(0.762);transform-origin:0 50%;">CERRADA</div>
<div style="left:926.50px;top:433.88px;width:9px;height:9px;border:1px solid #4a75a0;border-radius:1px;background:linear-gradient(135deg,#f4f4f4,#dcdcdc)"></div>
<div style="left:1140.46px;top:431.88px;height:12px;line-height:12px;font-size:8.4px;color:#383838;transform:scaleX(0.895);transform-origin:0 50%;">000000</div>
<div style="left:1180.00px;top:431.88px;height:12px;line-height:12px;font-size:8.4px;color:#383838;transform:scaleX(0.792);transform-origin:0 50%;">DIRECTA</div>
<div style="left:1302.31px;top:431.88px;height:12px;line-height:12px;font-size:8.4px;color:#383838;transform:scaleX(0.803);transform-origin:0 50%;">COPSOPX8227</div>
<div style="left:299.20px;top:448.67px;width:9px;height:9px;border:1px solid #4a75a0;border-radius:1px;background:linear-gradient(135deg,#f4f4f4,#dcdcdc)"></div>
<div style="left:313.00px;top:446.67px;height:12px;line-height:12px;font-size:8.4px;color:#383838;transform:scaleX(0.971);transform-origin:0 50%;">01/2025</div>
<div style="left:361.14px;top:446.67px;height:12px;line-height:12px;font-size:8.4px;color:#383838;transform:scaleX(0.895);transform-origin:0 50%;">2587</div>
<div style="left:397.00px;top:446.67px;height:12px;line-height:12px;font-size:8.4px;color:#383838;transform:scaleX(1.005);transform-origin:0 50%;">04/06/2025</div>
<div style="left:456.64px;top:446.67px;height:12px;line-height:12px;font-size:8.4px;color:#383838;transform:scaleX(0.895);transform-origin:0 50%;">0235</div>
<div style="left:491.52px;top:446.67px;height:12px;line-height:12px;font-size:8.4px;color:#383838;transform:scaleX(0.833);transform-origin:0 50%;">RE8PE5A10001</div>
<div style="left:567.76px;top:446.67px;height:12px;line-height:12px;font-size:8.4px;color:#383838;transform:scaleX(0.932);transform-origin:0 50%;">1.00</div>
<div style="left:613.40px;top:446.67px;height:12px;line-height:12px;font-size:8.4px;color:#383838;transform:scaleX(0.919);transform-origin:0 50%;">132.10</div>
<div style="left:704.76px;top:446.67px;height:12px;line-height:12px;font-size:8.4px;color:#383838;transform:scaleX(0.932);transform-origin:0 50%;">0.00</div>
<div style="left:739.40px;top:446.67px;height:12px;line-height:12px;font-size:8.4px;color:#383838;transform:scaleX(0.919);transform-origin:0 50%;">0.0000</div>
<div style="left:786.82px;top:446.67px;height:12px;line-height:12px;font-size:8.4px;color:#383838;transform:scaleX(0.895);transform-origin:0 50%;">1</div>
<div style="left:794.00px;top:446.67px;height:12px;line-height:12px;font-size:8.4px;color:#383838;transform:scaleX(0.895);transform-origin:0 50%;">000</div>
<div style="left:840.30px;top:448.67px;width:9px;height:9px;border:1px solid #4a75a0;border-radius:1px;background:linear-gradient(135deg,#f4f4f4,#dcdcdc)"></div>
<svg style="left:841.80px;top:450.67px" width="6" height="5"><path d="M0.4 2.6 L2.2 4.3 L5.6 0.5" stroke="#1a9a1a" stroke-width="1.5" fill="none"/></svg>
<div style="left:872.35px;top:446.67px;height:12px;line-height:12px;font-size:8.4px;color:#383838;transform:scaleX(0.762);transform-origin:0 50%;">CERRADA</div>
<div style="left:926.50px;top:448.67px;width:9px;height:9px;border:1px solid #4a75a0;border-radius:1px;background:linear-gradient(135deg,#f4f4f4,#dcdcdc)"></div>
<div style="left:1140.46px;top:446.67px;height:12px;line-height:12px;font-size:8.4px;color:#383838;transform:scaleX(0.895);transform-origin:0 50%;">000000</div>
<div style="left:1180.00px;top:446.67px;height:12px;line-height:12px;font-size:8.4px;color:#383838;transform:scaleX(0.792);transform-origin:0 50%;">DIRECTA</div>
<div style="left:1304.80px;top:446.67px;height:12px;line-height:12px;font-size:8.4px;color:#383838;transform:scaleX(0.808);transform-origin:0 50%;">PSPOPN0038</div>
<div style="left:299.20px;top:463.46px;width:9px;height:9px;border:1px solid #4a75a0;border-radius:1px;background:linear-gradient(135deg,#f4f4f4,#dcdcdc)"></div>
<div style="left:313.00px;top:461.46px;height:12px;line-height:12px;font-size:8.4px;color:#383838;transform:scaleX(0.971);transform-origin:0 50%;">01/2025</div>
<div style="left:361.14px;top:461.46px;height:12px;line-height:12px;font-size:8.4px;color:#383838;transform:scaleX(0.895);transform-origin:0 50%;">2601</div>
<div style="left:397.00px;top:461.46px;height:12px;line-height:12px;font-size:8.4px;color:#383838;transform:scaleX(1.005);transform-origin:0 50%;">05/06/2025</div>
<div style="left:456.64px;top:461.46px;height:12px;line-height:12px;font-size:8.4px;color:#383838;transform:scaleX(0.895);transform-origin:0 50%;">0515</div>
<div style="left:491.30px;top:461.46px;height:12px;line-height:12px;font-size:8.4px;color:#383838;transform:scaleX(0.821);transform-origin:0 50%;">SVVOP5A10001</div>
<div style="left:567.76px;top:461.46px;height:12px;line-height:12px;font-size:8.4px;color:#383838;transform:scaleX(0.932);transform-origin:0 50%;">1.00</div>
<div style="left:606.52px;top:461.46px;height:12px;line-height:12px;font-size:8.4px;color:#383838;transform:scaleX(0.932);transform-origin:0 50%;">5,880.60</div>
<div style="left:704.76px;top:461.46px;height:12px;line-height:12px;font-size:8.4px;color:#383838;transform:scaleX(0.932);transform-origin:0 50%;">0.00</div>
<div style="left:739.40px;top:461.46px;height:12px;line-height:12px;font-size:8.4px;color:#383838;transform:scaleX(0.919);transform-origin:0 50%;">0.0000</div>
<div style="left:786.82px;top:461.46px;height:12px;line-height:12px;font-size:8.4px;color:#383838;transform:scaleX(0.895);transform-origin:0 50%;">1</div>
<div style="left:794.00px;top:461.46px;height:12px;line-height:12px;font-size:8.4px;color:#383838;transform:scaleX(0.895);transform-origin:0 50%;">000</div>
<div style="left:840.30px;top:463.46px;width:9px;height:9px;border:1px solid #4a75a0;border-radius:1px;background:linear-gradient(135deg,#f4f4f4,#dcdcdc)"></div>
<div style="left:872.35px;top:461.46px;height:12px;line-height:12px;font-size:8.4px;color:#383838;transform:scaleX(0.762);transform-origin:0 50%;">CERRADA</div>
<div style="left:926.50px;top:463.46px;width:9px;height:9px;border:1px solid #4a75a0;border-radius:1px;background:linear-gradient(135deg,#f4f4f4,#dcdcdc)"></div>
<div style="left:1140.46px;top:461.46px;height:12px;line-height:12px;font-size:8.4px;color:#383838;transform:scaleX(0.895);transform-origin:0 50%;">000000</div>
<div style="left:1180.00px;top:461.46px;height:12px;line-height:12px;font-size:8.4px;color:#383838;transform:scaleX(0.792);transform-origin:0 50%;">DIRECTA</div>
<div style="left:1302.31px;top:461.46px;height:12px;line-height:12px;font-size:8.4px;color:#383838;transform:scaleX(0.803);transform-origin:0 50%;">COPSOPX8227</div>
<div style="left:299.20px;top:478.25px;width:9px;height:9px;border:1px solid #4a75a0;border-radius:1px;background:linear-gradient(135deg,#f4f4f4,#dcdcdc)"></div>
<div style="left:313.00px;top:476.25px;height:12px;line-height:12px;font-size:8.4px;color:#383838;transform:scaleX(0.971);transform-origin:0 50%;">01/2025</div>
<div style="left:361.14px;top:476.25px;height:12px;line-height:12px;font-size:8.4px;color:#383838;transform:scaleX(0.895);transform-origin:0 50%;">2602</div>
<div style="left:397.00px;top:476.25px;height:12px;line-height:12px;font-size:8.4px;color:#383838;transform:scaleX(1.005);transform-origin:0 50%;">06/06/2025</div>
<div style="left:456.64px;top:476.25px;height:12px;line-height:12px;font-size:8.4px;color:#383838;transform:scaleX(0.895);transform-origin:0 50%;">0284</div>
<div style="left:491.52px;top:476.25px;height:12px;line-height:12px;font-size:8.4px;color:#383838;transform:scaleX(0.841);transform-origin:0 50%;">RE2PA5A10001</div>
<div style="left:552.52px;top:476.25px;height:12px;line-height:12px;font-size:8.4px;color:#383838;transform:scaleX(0.932);transform-origin:0 50%;">1,800.00</div>
<div style="left:606.52px;top:476.25px;height:12px;line-height:12px;font-size:8.4px;color:#383838;transform:scaleX(0.932);transform-origin:0 50%;">2,880.00</div>
<div style="left:704.76px;top:476.25px;height:12px;line-height:12px;font-size:8.4px;color:#383838;transform:scaleX(0.932);transform-origin:0 50%;">0.00</div>
<div style="left:739.40px;top:476.25px;height:12px;line-height:12px;font-size:8.4px;color:#383838;transform:scaleX(0.919);transform-origin:0 50%;">1.0000</div>
<div style="left:786.82px;top:476.25px;height:12px;line-height:12px;font-size:8.4px;color:#383838;transform:scaleX(0.895);transform-origin:0 50%;">1</div>
<div style="left:794.00px;top:476.25px;height:12px;line-height:12px;font-size:8.4px;color:#383838;transform:scaleX(0.895);transform-origin:0 50%;">000</div>
<div style="left:840.30px;top:478.25px;width:9px;height:9px;border:1px solid #4a75a0;border-radius:1px;background:linear-gradient(135deg,#f4f4f4,#dcdcdc)"></div>
<div style="left:872.35px;top:476.25px;height:12px;line-height:12px;font-size:8.4px;color:#383838;transform:scaleX(0.762);transform-origin:0 50%;">CERRADA</div>
<div style="left:926.50px;top:478.25px;width:9px;height:9px;border:1px solid #4a75a0;border-radius:1px;background:linear-gradient(135deg,#f4f4f4,#dcdcdc)"></div>
<div style="left:1140.46px;top:476.25px;height:12px;line-height:12px;font-size:8.4px;color:#383838;transform:scaleX(0.895);transform-origin:0 50%;">000000</div>
<div style="left:1180.00px;top:476.25px;height:12px;line-height:12px;font-size:8.4px;color:#383838;transform:scaleX(0.792);transform-origin:0 50%;">DIRECTA</div>
<div style="left:1307.25px;top:476.25px;height:12px;line-height:12px;font-size:8.4px;color:#383838;transform:scaleX(0.801);transform-origin:0 50%;">PSPOPT003</div>
<div style="left:299.20px;top:493.04px;width:9px;height:9px;border:1px solid #4a75a0;border-radius:1px;background:linear-gradient(135deg,#f4f4f4,#dcdcdc)"></div>
<div style="left:313.00px;top:491.04px;height:12px;line-height:12px;font-size:8.4px;color:#383838;transform:scaleX(0.971);transform-origin:0 50%;">01/2025</div>
<div style="left:361.14px;top:491.04px;height:12px;line-height:12px;font-size:8.4px;color:#383838;transform:scaleX(0.895);transform-origin:0 50%;">2603</div>
<div style="left:397.00px;top:491.04px;height:12px;line-height:12px;font-size:8.4px;color:#383838;transform:scaleX(1.005);transform-origin:0 50%;">06/06/2025</div>
<div style="left:456.64px;top:491.04px;height:12px;line-height:12px;font-size:8.4px;color:#383838;transform:scaleX(0.895);transform-origin:0 50%;">0154</div>
<div style="left:492.24px;top:491.04px;height:12px;line-height:12px;font-size:8.4px;color:#383838;transform:scaleX(0.835);transform-origin:0 50%;">IPRAN5A10003</div>
<div style="left:563.58px;top:491.04px;height:12px;line-height:12px;font-size:8.4px;color:#383838;transform:scaleX(0.924);transform-origin:0 50%;">75.00</div>
<div style="left:602.34px;top:491.04px;height:12px;line-height:12px;font-size:8.4px;color:#383838;transform:scaleX(0.927);transform-origin:0 50%;">39,076.89</div>
<div style="left:704.76px;top:491.04px;height:12px;line-height:12px;font-size:8.4px;color:#383838;transform:scaleX(0.932);transform-origin:0 50%;">0.00</div>
<div style="left:739.40px;top:491.04px;height:12px;line-height:12px;font-size:8.4px;color:#383838;transform:scaleX(0.919);transform-origin:0 50%;">1.0000</div>
<div style="left:786.82px;top:491.04px;height:12px;line-height:12px;font-size:8.4px;color:#383838;transform:scaleX(0.895);transform-origin:0 50%;">1</div>
<div style="left:794.00px;top:491.04px;height:12px;line-height:12px;font-size:8.4px;color:#383838;transform:scaleX(0.895);transform-origin:0 50%;">000</div>
<div style="left:840.30px;top:493.04px;width:9px;height:9px;border:1px solid #4a75a0;border-radius:1px;background:linear-gradient(135deg,#f4f4f4,#dcdcdc)"></div>
<div style="left:872.35px;top:491.04px;height:12px;line-height:12px;font-size:8.4px;color:#383838;transform:scaleX(0.762);transform-origin:0 50%;">CERRADA</div>
<div style="left:926.50px;top:493.04px;width:9px;height:9px;border:1px solid #4a75a0;border-radius:1px;background:linear-gradient(135deg,#f4f4f4,#dcdcdc)"></div>
<div style="left:1140.46px;top:491.04px;height:12px;line-height:12px;font-size:8.4px;color:#383838;transform:scaleX(0.895);transform-origin:0 50%;">000000</div>
<div style="left:1180.00px;top:491.04px;height:12px;line-height:12px;font-size:8.4px;color:#383838;transform:scaleX(0.792);transform-origin:0 50%;">DIRECTA</div>
<div style="left:1304.94px;top:491.04px;height:12px;line-height:12px;font-size:8.4px;color:#383838;transform:scaleX(0.796);transform-origin:0 50%;">PRPPNAK209</div>
<div style="left:299.20px;top:507.83px;width:9px;height:9px;border:1px solid #4a75a0;border-radius:1px;background:linear-gradient(135deg,#f4f4f4,#dcdcdc)"></div>
<div style="left:313.00px;top:505.83px;height:12px;line-height:12px;font-size:8.4px;color:#383838;transform:scaleX(0.971);transform-origin:0 50%;">01/2025</div>
<div style="left:361.14px;top:505.83px;height:12px;line-height:12px;font-size:8.4px;color:#383838;transform:scaleX(0.895);transform-origin:0 50%;">2605</div>
<div style="left:397.00px;top:505.83px;height:12px;line-height:12px;font-size:8.4px;color:#383838;transform:scaleX(1.005);transform-origin:0 50%;">06/06/2025</div>
<div style="left:456.64px;top:505.83px;height:12px;line-height:12px;font-size:8.4px;color:#383838;transform:scaleX(0.895);transform-origin:0 50%;">0213</div>
<div style="left:492.24px;top:505.83px;height:12px;line-height:12px;font-size:8.4px;color:#383838;transform:scaleX(0.835);transform-origin:0 50%;">IPRAN5A10004</div>
<div style="left:559.40px;top:505.83px;height:12px;line-height:12px;font-size:8.4px;color:#383838;transform:scaleX(0.919);transform-origin:0 50%;">105.00</div>
<div style="left:602.34px;top:505.83px;height:12px;line-height:12px;font-size:8.4px;color:#383838;transform:scaleX(0.927);transform-origin:0 50%;">60,022.33</div>
<div style="left:704.76px;top:505.83px;height:12px;line-height:12px;font-size:8.4px;color:#383838;transform:scaleX(0.932);transform-origin:0 50%;">0.00</div>
<div style="left:739.40px;top:505.83px;height:12px;line-height:12px;font-size:8.4px;color:#383838;transform:scaleX(0.919);transform-origin:0 50%;">1.0000</div>
<div style="left:786.82px;top:505.83px;height:12px;line-height:12px;font-size:8.4px;color:#383838;transform:scaleX(0.895);transform-origin:0 50%;">1</div>
<div style="left:794.00px;top:505.83px;height:12px;line-height:12px;font-size:8.4px;color:#383838;transform:scaleX(0.895);transform-origin:0 50%;">000</div>
<div style="left:840.30px;top:507.83px;width:9px;height:9px;border:1px solid #4a75a0;border-radius:1px;background:linear-gradient(135deg,#f4f4f4,#dcdcdc)"></div>
<div style="left:872.35px;top:505.83px;height:12px;line-height:12px;font-size:8.4px;color:#383838;transform:scaleX(0.762);transform-origin:0 50%;">CERRADA</div>
<div style="left:926.50px;top:507.83px;width:9px;height:9px;border:1px solid #4a75a0;border-radius:1px;background:linear-gradient(135deg,#f4f4f4,#dcdcdc)"></div>
<div style="left:1140.46px;top:505.83px;height:12px;line-height:12px;font-size:8.4px;color:#383838;transform:scaleX(0.895);transform-origin:0 50%;">000000</div>
<div style="left:1180.00px;top:505.83px;height:12px;line-height:12px;font-size:8.4px;color:#383838;transform:scaleX(0.792);transform-origin:0 50%;">DIRECTA</div>
<div style="left:1304.94px;top:505.83px;height:12px;line-height:12px;font-size:8.4px;color:#383838;transform:scaleX(0.796);transform-origin:0 50%;">PRPPNAP210</div>
<div style="left:299.20px;top:522.62px;width:9px;height:9px;border:1px solid #4a75a0;border-radius:1px;background:linear-gradient(135deg,#f4f4f4,#dcdcdc)"></div>
<div style="left:313.00px;top:520.62px;height:12px;line-height:12px;font-size:8.4px;color:#383838;transform:scaleX(0.971);transform-origin:0 50%;">01/2025</div>
<div style="left:361.14px;top:520.62px;height:12px;line-height:12px;font-size:8.4px;color:#383838;transform:scaleX(0.895);transform-origin:0 50%;">2605</div>
<div style="left:397.00px;top:520.62px;height:12px;line-height:12px;font-size:8.4px;color:#383838;transform:scaleX(1.005);transform-origin:0 50%;">06/06/2025</div>
<div style="left:456.64px;top:520.62px;height:12px;line-height:12px;font-size:8.4px;color:#383838;transform:scaleX(0.895);transform-origin:0 50%;">0213</div>
<div style="left:492.24px;top:520.62px;height:12px;line-height:12px;font-size:8.4px;color:#383838;transform:scaleX(0.835);transform-origin:0 50%;">IPRAN5A10004</div>
<div style="left:559.40px;top:520.62px;height:12px;line-height:12px;font-size:8.4px;color:#383838;transform:scaleX(0.919);transform-origin:0 50%;">285.00</div>
<div style="left:598.16px;top:520.62px;height:12px;line-height:12px;font-size:8.4px;color:#383838;transform:scaleX(0.924);transform-origin:0 50%;">127,237.30</div>
<div style="left:704.76px;top:520.62px;height:12px;line-height:12px;font-size:8.4px;color:#383838;transform:scaleX(0.932);transform-origin:0 50%;">0.00</div>
<div style="left:739.40px;top:520.62px;height:12px;line-height:12px;font-size:8.4px;color:#383838;transform:scaleX(0.919);transform-origin:0 50%;">1.0000</div>
<div style="left:786.82px;top:520.62px;height:12px;line-height:12px;font-size:8.4px;color:#383838;transform:scaleX(0.895);transform-origin:0 50%;">1</div>
<div style="left:794.00px;top:520.62px;height:12px;line-height:12px;font-size:8.4px;color:#383838;transform:scaleX(0.895);transform-origin:0 50%;">000</div>
<div style="left:840.30px;top:522.62px;width:9px;height:9px;border:1px solid #4a75a0;border-radius:1px;background:linear-gradient(135deg,#f4f4f4,#dcdcdc)"></div>
<div style="left:872.35px;top:520.62px;height:12px;line-height:12px;font-size:8.4px;color:#383838;transform:scaleX(0.762);transform-origin:0 50%;">CERRADA</div>
<div style="left:926.50px;top:522.62px;width:9px;height:9px;border:1px solid #4a75a0;border-radius:1px;background:linear-gradient(135deg,#f4f4f4,#dcdcdc)"></div>
<div style="left:1140.46px;top:520.62px;height:12px;line-height:12px;font-size:8.4px;color:#383838;transform:scaleX(0.895);transform-origin:0 50%;">000000</div>
<div style="left:1180.00px;top:520.62px;height:12px;line-height:12px;font-size:8.4px;color:#383838;transform:scaleX(0.792);transform-origin:0 50%;">DIRECTA</div>
<div style="left:1304.94px;top:520.62px;height:12px;line-height:12px;font-size:8.4px;color:#383838;transform:scaleX(0.796);transform-origin:0 50%;">PRPPNAP210</div>
<div style="left:299.20px;top:537.41px;width:9px;height:9px;border:1px solid #4a75a0;border-radius:1px;background:linear-gradient(135deg,#f4f4f4,#dcdcdc)"></div>
<div style="left:313.00px;top:535.41px;height:12px;line-height:12px;font-size:8.4px;color:#383838;transform:scaleX(0.971);transform-origin:0 50%;">01/2025</div>
<div style="left:361.14px;top:535.41px;height:12px;line-height:12px;font-size:8.4px;color:#383838;transform:scaleX(0.895);transform-origin:0 50%;">2610</div>
<div style="left:397.00px;top:535.41px;height:12px;line-height:12px;font-size:8.4px;color:#383838;transform:scaleX(1.005);transform-origin:0 50%;">09/06/2025</div>
<div style="left:456.64px;top:535.41px;height:12px;line-height:12px;font-size:8.4px;color:#383838;transform:scaleX(0.895);transform-origin:0 50%;">0497</div>
<div style="left:492.46px;top:535.41px;height:12px;line-height:12px;font-size:8.4px;color:#383838;transform:scaleX(0.848);transform-origin:0 50%;">IPRA15A10001</div>
<div style="left:563.58px;top:535.41px;height:12px;line-height:12px;font-size:8.4px;color:#383838;transform:scaleX(0.924);transform-origin:0 50%;">75.00</div>
<div style="left:602.34px;top:535.41px;height:12px;line-height:12px;font-size:8.4px;color:#383838;transform:scaleX(0.927);transform-origin:0 50%;">28,021.76</div>
<div style="left:704.76px;top:535.41px;height:12px;line-height:12px;font-size:8.4px;color:#383838;transform:scaleX(0.932);transform-origin:0 50%;">0.00</div>
<div style="left:739.40px;top:535.41px;height:12px;line-height:12px;font-size:8.4px;color:#383838;transform:scaleX(0.919);transform-origin:0 50%;">1.0000</div>
<div style="left:786.82px;top:535.41px;height:12px;line-height:12px;font-size:8.4px;color:#383838;transform:scaleX(0.895);transform-origin:0 50%;">1</div>
<div style="left:794.00px;top:535.41px;height:12px;line-height:12px;font-size:8.4px;color:#383838;transform:scaleX(0.895);transform-origin:0 50%;">000</div>
<div style="left:840.30px;top:537.41px;width:9px;height:9px;border:1px solid #4a75a0;border-radius:1px;background:linear-gradient(135deg,#f4f4f4,#dcdcdc)"></div>
<div style="left:872.35px;top:535.41px;height:12px;line-height:12px;font-size:8.4px;color:#383838;transform:scaleX(0.762);transform-origin:0 50%;">CERRADA</div>
<div style="left:926.50px;top:537.41px;width:9px;height:9px;border:1px solid #4a75a0;border-radius:1px;background:linear-gradient(135deg,#f4f4f4,#dcdcdc)"></div>
<div style="left:1140.46px;top:535.41px;height:12px;line-height:12px;font-size:8.4px;color:#383838;transform:scaleX(0.895);transform-origin:0 50%;">000000</div>
<div style="left:1180.00px;top:535.41px;height:12px;line-height:12px;font-size:8.4px;color:#383838;transform:scaleX(0.792);transform-origin:0 50%;">DIRECTA</div>
<div style="left:1301.02px;top:535.41px;height:12px;line-height:12px;font-size:8.4px;color:#383838;transform:scaleX(0.799);transform-origin:0 50%;">PRPPAKFEB231</div>
<div style="left:299.20px;top:552.20px;width:9px;height:9px;border:1px solid #4a75a0;border-radius:1px;background:linear-gradient(135deg,#f4f4f4,#dcdcdc)"></div>
<div style="left:313.00px;top:550.20px;height:12px;line-height:12px;font-size:8.4px;color:#383838;transform:scaleX(0.971);transform-origin:0 50%;">01/2025</div>
<div style="left:361.14px;top:550.20px;height:12px;line-height:12px;font-size:8.4px;color:#383838;transform:scaleX(0.895);transform-origin:0 50%;">2610</div>
<div style="left:397.00px;top:550.20px;height:12px;line-height:12px;font-size:8.4px;color:#383838;transform:scaleX(1.005);transform-origin:0 50%;">09/06/2025</div>
<div style="left:456.64px;top:550.20px;height:12px;line-height:12px;font-size:8.4px;color:#383838;transform:scaleX(0.895);transform-origin:0 50%;">0497</div>
<div style="left:492.46px;top:550.20px;height:12px;line-height:12px;font-size:8.4px;color:#383838;transform:scaleX(0.848);transform-origin:0 50%;">IPRA15A10001</div>
<div style="left:559.40px;top:550.20px;height:12px;line-height:12px;font-size:8.4px;color:#383838;transform:scaleX(0.919);transform-origin:0 50%;">150.00</div>
<div style="left:602.34px;top:550.20px;height:12px;line-height:12px;font-size:8.4px;color:#383838;transform:scaleX(0.927);transform-origin:0 50%;">71,176.75</div>
<div style="left:704.76px;top:550.20px;height:12px;line-height:12px;font-size:8.4px;color:#383838;transform:scaleX(0.932);transform-origin:0 50%;">0.00</div>
<div style="left:739.40px;top:550.20px;height:12px;line-height:12px;font-size:8.4px;color:#383838;transform:scaleX(0.919);transform-origin:0 50%;">1.0000</div>
<div style="left:786.82px;top:550.20px;height:12px;line-height:12px;font-size:8.4px;color:#383838;transform:scaleX(0.895);transform-origin:0 50%;">1</div>
<div style="left:794.00px;top:550.20px;height:12px;line-height:12px;font-size:8.4px;color:#383838;transform:scaleX(0.895);transform-origin:0 50%;">000</div>
<div style="left:840.30px;top:552.20px;width:9px;height:9px;border:1px solid #4a75a0;border-radius:1px;background:linear-gradient(135deg,#f4f4f4,#dcdcdc)"></div>
<div style="left:872.35px;top:550.20px;height:12px;line-height:12px;font-size:8.4px;color:#383838;transform:scaleX(0.762);transform-origin:0 50%;">CERRADA</div>
<div style="left:926.50px;top:552.20px;width:9px;height:9px;border:1px solid #4a75a0;border-radius:1px;background:linear-gradient(135deg,#f4f4f4,#dcdcdc)"></div>
<div style="left:1140.46px;top:550.20px;height:12px;line-height:12px;font-size:8.4px;color:#383838;transform:scaleX(0.895);transform-origin:0 50%;">000000</div>
<div style="left:1180.00px;top:550.20px;height:12px;line-height:12px;font-size:8.4px;color:#383838;transform:scaleX(0.792);transform-origin:0 50%;">DIRECTA</div>
<div style="left:1301.02px;top:550.20px;height:12px;line-height:12px;font-size:8.4px;color:#383838;transform:scaleX(0.799);transform-origin:0 50%;">PRPPAKFEB231</div>
<div style="left:640.00px;top:577.80px;height:12px;line-height:12px;font-size:8.4px;font-weight:bold;color:#484848;transform:scaleX(0.775);transform-origin:0 50%;">DÓLARES</div>
<div style="left:704.15px;top:577.80px;height:12px;line-height:12px;font-size:8.4px;font-weight:bold;color:#484848;transform:scaleX(0.969);transform-origin:0 50%;">0.00</div>
<div style="left:640.00px;top:591.00px;height:12px;line-height:12px;font-size:8.4px;font-weight:bold;color:#484848;transform:scaleX(0.792);transform-origin:0 50%;">EURO</div>
<div style="left:704.15px;top:591.00px;height:12px;line-height:12px;font-size:8.4px;font-weight:bold;color:#484848;transform:scaleX(0.969);transform-origin:0 50%;">0.00</div>
<div style="left:585.10px;top:631.55px;height:12px;line-height:12px;font-size:8.4px;font-weight:bold;color:#484848;transform:scaleX(0.974);transform-origin:0 50%;">67,361,080.11</div>
<div style="left:704.15px;top:631.55px;height:12px;line-height:12px;font-size:8.4px;font-weight:bold;color:#484848;transform:scaleX(0.969);transform-origin:0 50%;">0.00</div>
<div style="left:1580px;top:94.5px;width:10px;height:561px;background:#e6e6e6;border-left:1px solid #f2f2f2;border-right:1px solid #d4d4d4"></div>
<div style="left:296px;top:645.5px;width:1294px;height:10px;background:#e4e4e4"></div>
<div style="left:296px;top:655.4px;width:1294px;height:12px;background:#f6f6f6"></div>
<div style="left:296px;top:655.5px;width:11px;height:12px;background:#f8f8f8;border-right:1.5px solid #a0a0a0"></div>
<svg style="left:299px;top:658.5px" width="5" height="6"><path d="M4 0V6L0 3Z" fill="#111"/></svg>
<div style="left:626.6px;top:655.4px;width:951px;height:12px;background:#eeeeee"></div>
<div style="left:1577.6px;top:655.5px;width:12.4px;height:12px;background:#f8f8f8;border-left:1.5px solid #a0a0a0;border-right:1px solid #a0a0a0"></div>
<svg style="left:1582px;top:658.5px" width="5" height="6"><path d="M0 0V6L4 3Z" fill="#111"/></svg>
<div style="left:296px;top:666.5px;width:1294px;height:1.5px;background:#787878"></div>
<div style="left:296px;top:644px;width:1px;height:23px;background:#a8b0b8"></div>
<div style="left:1300px;top:633.5px;width:279px;height:11px;background:#f3f3f3"></div>
<div style="left:1366px;top:618px;width:110px;height:15px;line-height:15px;font-size:13.8px;color:#c8c8c8">Activar Windows</div>
<div style="left:1473px;top:634.7px;width:1px;height:10px;background:#d8d8d8"></div>
<div style="left:1515px;top:634px;width:50px;height:10.5px;overflow:hidden;font-size:10px;line-height:14px;color:#cccccc">Windows.</div>
<div style="left:1353px;top:83px;width:158px;height:493px;border:5px solid #00a1e4"></div>
<div style="left:1358px;top:88px;width:148px;height:1px;background:#f0ee80"></div>
<svg style="left:876px;top:-6px" width="26" height="14"><path d="M3 1 L14 8.5" stroke="#d8d8d8" stroke-width="3" stroke-linecap="round"/><path d="M10.5 0 L17 6.3" stroke="#1f73b7" stroke-width="8.6" stroke-linecap="round"/></svg>
</body></html>
